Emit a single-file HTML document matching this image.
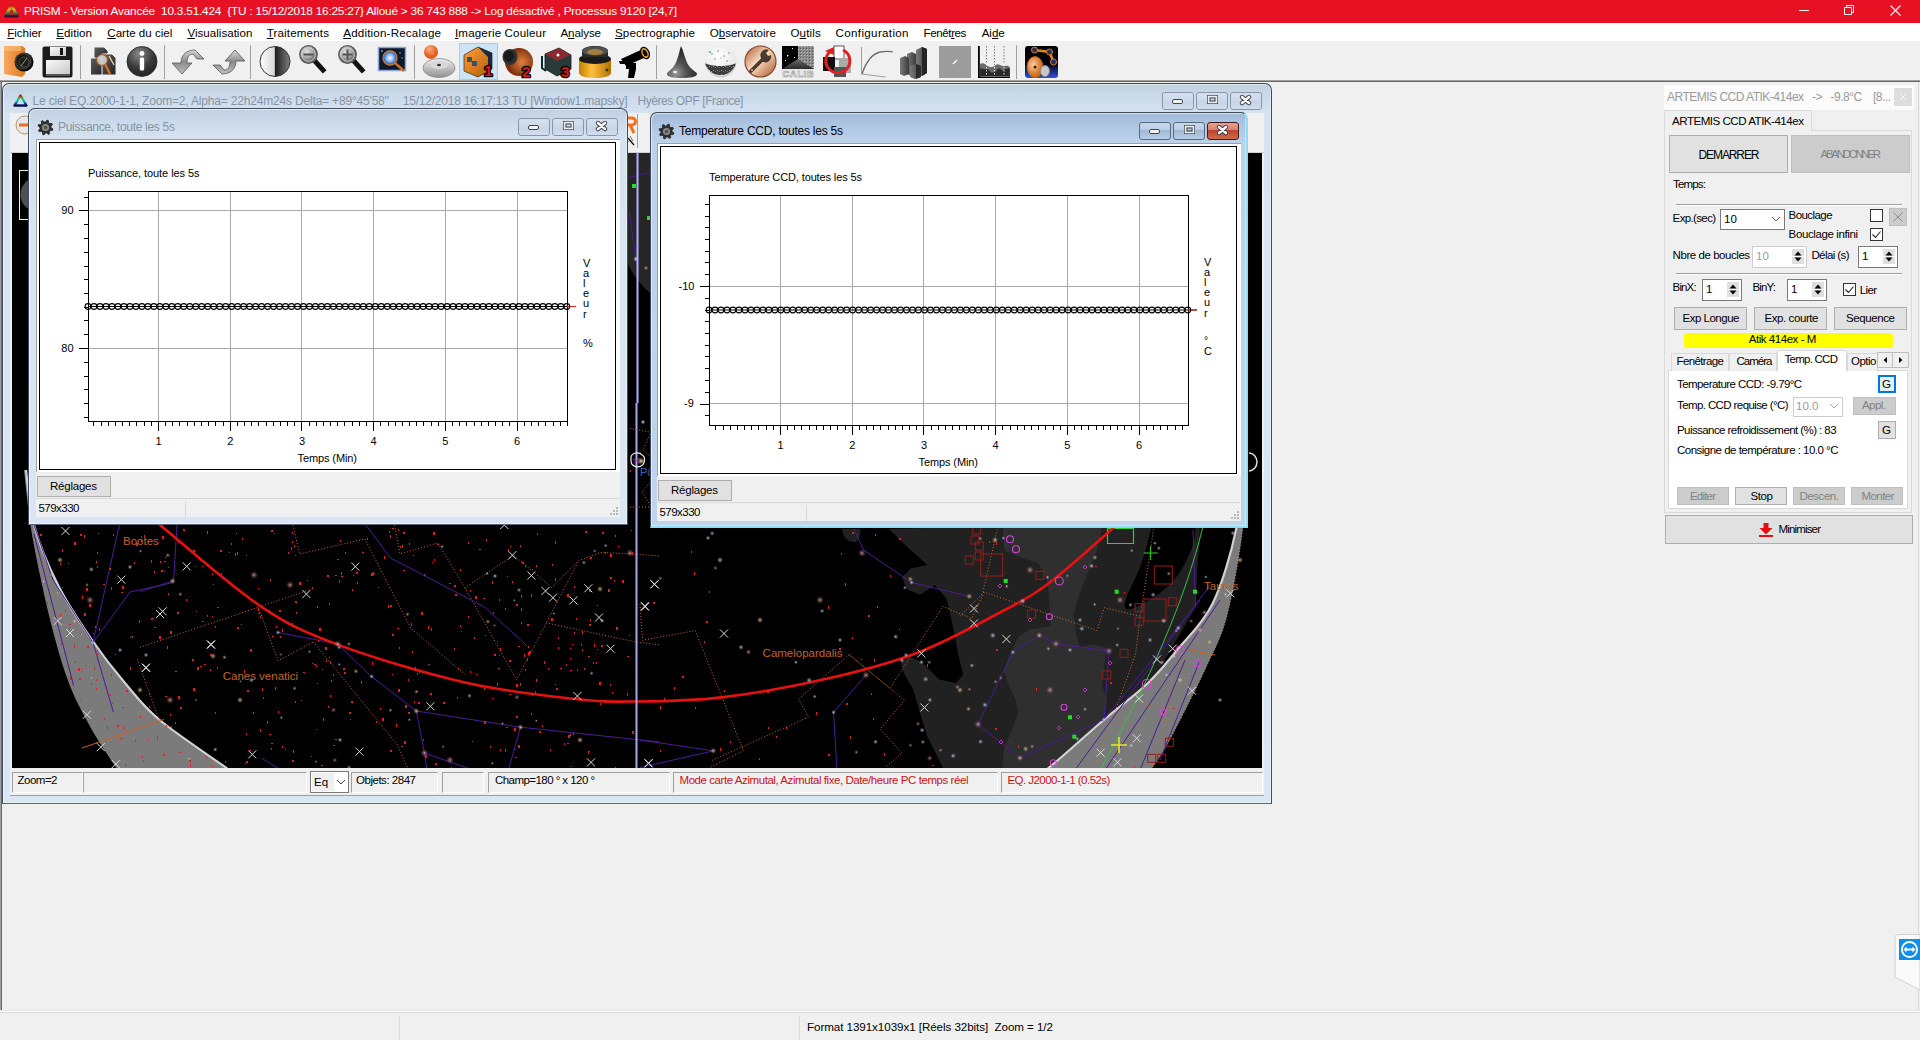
<!DOCTYPE html>
<html><head><meta charset="utf-8">
<style>
*{margin:0;padding:0;box-sizing:border-box}
html,body{width:1920px;height:1040px;overflow:hidden;background:#f0f0f0;font-family:"Liberation Sans",sans-serif;position:relative}
.a{position:absolute}
svg.a{overflow:visible}
.t{position:absolute;white-space:nowrap;line-height:1}
</style></head><body>
<div class="a" style="left:0px;top:0px;width:1920px;height:23px;background:#e81123"></div>
<div class="a" style="left:0px;top:23px;width:1920px;height:18px;background:#fff"></div>
<div class="a" style="left:0px;top:41px;width:1920px;height:39px;background:#f0f0f0"></div>
<svg class="a" style="left:3px;top:3px;" width="17" height="16" viewBox="0 0 17 16"><defs><linearGradient id="pg" x1="0" y1="0" x2="0" y2="1"><stop offset="0" stop-color="#b02010"/><stop offset=".35" stop-color="#e0c020"/><stop offset=".65" stop-color="#40a040"/><stop offset="1" stop-color="#301030"/></linearGradient></defs><path d="M8.5 2.5 L14.5 13 L2.5 13 Z" fill="none" stroke="url(#pg)" stroke-width="2.8" stroke-linejoin="round"/></svg>
<div class="t" id="t0" style="left:24px;top:6.01px;font-size:11.8px;color:#fff;letter-spacing:-0.201px;">PRISM - Version Avancée&nbsp; 10.3.51.424&nbsp; {TU : 15/12/2018 16:25:27} Alloué &gt; 36 743 888 -&gt; Log désactivé , Processus 9120 [24,7]</div>
<svg class="a" style="left:1798px;top:5px;" width="12" height="12" viewBox="0 0 12 12"><rect x="1" y="5" width="10" height="1" fill="#fff"/></svg>
<svg class="a" style="left:1843px;top:4px;" width="12" height="12" viewBox="0 0 12 12"><path d="M1.5 3.5h7v7h-7z M3.5 3.5v-2h7v7h-2" fill="none" stroke="#fff" stroke-width="1"/></svg>
<svg class="a" style="left:1890px;top:5px;" width="11" height="11" viewBox="0 0 11 11"><path d="M0.5 0.5l10 10M10.5 0.5l-10 10" stroke="#fff" stroke-width="1.1"/></svg>
<div class="t" id="t1" style="left:7.3px;top:26.88px;font-size:11.6px;color:#000;letter-spacing:-0.068px;text-decoration-thickness:1px;text-underline-offset:0.5px"><u>F</u>ichier</div>
<div class="t" id="t2" style="left:56.3px;top:26.88px;font-size:11.6px;color:#000;letter-spacing:0.038px;text-decoration-thickness:1px;text-underline-offset:0.5px"><u>E</u>dition</div>
<div class="t" id="t3" style="left:107.3px;top:26.88px;font-size:11.6px;color:#000;letter-spacing:0.000px;text-decoration-thickness:1px;text-underline-offset:0.5px"><u>C</u>arte du ciel</div>
<div class="t" id="t4" style="left:187.4px;top:26.88px;font-size:11.6px;color:#000;letter-spacing:0.007px;text-decoration-thickness:1px;text-underline-offset:0.5px"><u>V</u>isualisation</div>
<div class="t" id="t5" style="left:266.7px;top:26.88px;font-size:11.6px;color:#000;letter-spacing:0.151px;text-decoration-thickness:1px;text-underline-offset:0.5px"><u>T</u>raitements</div>
<div class="t" id="t6" style="left:343.2px;top:26.88px;font-size:11.6px;color:#000;letter-spacing:0.189px;text-decoration-thickness:1px;text-underline-offset:0.5px"><u>A</u>ddition-Recalage</div>
<div class="t" id="t7" style="left:455px;top:26.88px;font-size:11.6px;color:#000;letter-spacing:0.138px;text-decoration-thickness:1px;text-underline-offset:0.5px"><u>I</u>magerie Couleur</div>
<div class="t" id="t8" style="left:560.5px;top:26.88px;font-size:11.6px;color:#000;letter-spacing:-0.127px;text-decoration-thickness:1px;text-underline-offset:0.5px">A<u>n</u>alyse</div>
<div class="t" id="t9" style="left:615px;top:26.88px;font-size:11.6px;color:#000;letter-spacing:0.105px;text-decoration-thickness:1px;text-underline-offset:0.5px"><u>S</u>pectrographie</div>
<div class="t" id="t10" style="left:709.7px;top:26.88px;font-size:11.6px;color:#000;letter-spacing:-0.017px;text-decoration-thickness:1px;text-underline-offset:0.5px">O<u>b</u>servatoire</div>
<div class="t" id="t11" style="left:790.4px;top:26.88px;font-size:11.6px;color:#000;letter-spacing:0.149px;text-decoration-thickness:1px;text-underline-offset:0.5px">O<u>u</u>tils</div>
<div class="t" id="t12" style="left:835.6px;top:26.88px;font-size:11.6px;color:#000;letter-spacing:0.333px;text-decoration-thickness:1px;text-underline-offset:0.5px">Confi<u>g</u>uration</div>
<div class="t" id="t13" style="left:923.6px;top:26.88px;font-size:11.6px;color:#000;letter-spacing:-0.426px;text-decoration-thickness:1px;text-underline-offset:0.5px">Fenêt<u>r</u>es</div>
<div class="t" id="t14" style="left:981.7px;top:26.88px;font-size:11.6px;color:#000;letter-spacing:-0.046px;text-decoration-thickness:1px;text-underline-offset:0.5px">Ai<u>d</u>e</div>
<div class="a" style="left:0px;top:80px;width:1920px;height:1px;background:#a0a0a0"></div>
<div class="a" style="left:0px;top:81px;width:1920px;height:1px;background:#696969"></div>
<div class="a" style="left:0px;top:82px;width:1px;height:929px;background:#a0a0a0"></div>
<div class="a" style="left:1px;top:82px;width:1px;height:929px;background:#696969"></div>
<div class="a" style="left:0px;top:1010px;width:1920px;height:1px;background:#e3e3e3"></div>
<div class="a" style="left:0px;top:1011px;width:1920px;height:1px;background:#fff"></div>
<div class="a" style="left:0px;top:1012px;width:1920px;height:1px;background:#d9d9d9"></div>
<div class="a" style="left:399px;top:1016px;width:1px;height:24px;background:#d9d9d9"></div>
<div class="a" style="left:799px;top:1016px;width:1px;height:24px;background:#d9d9d9"></div>
<div class="t" id="t15" style="left:807px;top:1020.68px;font-size:11.6px;color:#000;letter-spacing:-0.056px;">Format 1391x1039x1 [Réels 32bits]&nbsp; Zoom = 1/2</div>
<div class="a" style="left:80px;top:45px;width:1px;height:34px;background:#a0a0a0"></div>
<div class="a" style="left:164px;top:45px;width:1px;height:34px;background:#a0a0a0"></div>
<div class="a" style="left:250px;top:45px;width:1px;height:34px;background:#a0a0a0"></div>
<div class="a" style="left:414px;top:45px;width:1px;height:34px;background:#a0a0a0"></div>
<div class="a" style="left:656px;top:45px;width:1px;height:34px;background:#a0a0a0"></div>
<div class="a" style="left:1016px;top:45px;width:1px;height:34px;background:#a0a0a0"></div>
<div class="a" style="left:459px;top:43px;width:39px;height:37px;background:#cce4f7;border:1px solid #99d1ff"></div>
<svg class="a" style="left:3px;top:45px;" width="32" height="33" viewBox="0 0 32 33"><defs><linearGradient id="fo" x1="0" y1="0" x2="1" y2="0"><stop offset="0" stop-color="#f8a860"/><stop offset="1" stop-color="#e07820"/></linearGradient><radialGradient id="le" cx=".45" cy=".45"><stop offset="0" stop-color="#303030"/><stop offset=".55" stop-color="#101010"/><stop offset=".8" stop-color="#3a3a3a"/><stop offset="1" stop-color="#000"/></radialGradient></defs><path d="M1 1h18l3 2v26l-3 3-18-3z" fill="url(#fo)"/><path d="M1 1h17v5H1z" fill="#f9c080" opacity=".6"/><circle cx="21" cy="17" r="9.5" fill="url(#le)"/><circle cx="21" cy="17" r="5" fill="#1a1a1a" stroke="#5a5a40" stroke-width=".8"/><path d="M18 21l6-8" stroke="#c0c080" stroke-width=".8"/></svg>
<svg class="a" style="left:42px;top:46px;" width="32" height="32" viewBox="0 0 32 32"><defs><linearGradient id="fl" x1="0" y1="0" x2="1" y2="1"><stop offset="0" stop-color="#fafafa"/><stop offset="1" stop-color="#c8c8c8"/></linearGradient></defs><path d="M2.5 0.5h26a2 2 0 0 1 2 2v27a2 2 0 0 1-2 2h-26a2 2 0 0 1-2-2v-27a2 2 0 0 1 2-2z" fill="#1c1c1c"/><rect x="8" y="1" width="16" height="9" fill="url(#fl)"/><rect x="18" y="2" width="3" height="7" fill="#111"/><rect x="4" y="14" width="24" height="14" fill="url(#fl)"/><rect x="4" y="28" width="24" height="2" fill="#555"/></svg>
<svg class="a" style="left:89px;top:46px;" width="29" height="31" viewBox="0 0 29 31"><defs><linearGradient id="im" x1="0" y1="0" x2="1" y2="1"><stop offset="0" stop-color="#606060"/><stop offset="1" stop-color="#202020"/></linearGradient></defs><path d="M5 1h10l4 4v9H5z" fill="url(#im)" stroke="#eee" stroke-width="1"/><rect x="1.5" y="12" width="14" height="17" fill="url(#im)" stroke="#eee" stroke-width="1"/><path d="M13 8h10l4 4v17H13z" fill="url(#im)" stroke="#eee" stroke-width="1"/><circle cx="13" cy="14" r="5.5" fill="#d8d8d8" opacity=".85" stroke="#a06030" stroke-width="1.3"/><path d="M16 18l5 10" stroke="#d07020" stroke-width="2.4"/><path d="M20 10l5 9" stroke="#f0d0a0" stroke-width="1.4"/></svg>
<svg class="a" style="left:126px;top:46px;" width="32" height="32" viewBox="0 0 32 32"><defs><radialGradient id="in" cx=".4" cy=".25" r=".9"><stop offset="0" stop-color="#8a8a8a"/><stop offset=".5" stop-color="#3a3a3a"/><stop offset="1" stop-color="#1a1a1a"/></radialGradient></defs><circle cx="16" cy="15.5" r="15" fill="url(#in)" stroke="#222" stroke-width=".8"/><circle cx="16" cy="7.5" r="2.4" fill="#fff"/><rect x="13.8" y="11.5" width="4.4" height="13" rx="1.5" fill="#fff"/></svg>
<svg class="a" style="left:172px;top:48px;" width="34" height="28" viewBox="0 0 34 28"><defs><linearGradient id="ar" x1="0" y1="0" x2="0" y2="1"><stop offset="0" stop-color="#d8d8d8"/><stop offset=".5" stop-color="#8a8a8a"/><stop offset="1" stop-color="#c0c0c0"/></linearGradient></defs><path d="M9 15c0-10 8-13 14-13l9 9-7 0-4-5c-4 0-6 3-6 9h5l-10 11-10-11z" fill="url(#ar)" stroke="#555" stroke-width=".8"/></svg>
<svg class="a" style="left:211px;top:48px;" width="34" height="28" viewBox="0 0 34 28"><path d="M25 13c0 10-8 13-14 13l-9-9h7l4 5c4 0 6-3 6-9h-5l10-11 10 11z" fill="url(#ar)" stroke="#555" stroke-width=".8"/></svg>
<svg class="a" style="left:259px;top:45px;" width="32" height="33" viewBox="0 0 32 33"><defs><linearGradient id="hc" x1="0" y1="0" x2="1" y2="0"><stop offset="0" stop-color="#fff"/><stop offset=".48" stop-color="#d8d8d8"/><stop offset=".5" stop-color="#1a1a1a"/><stop offset="1" stop-color="#808080"/></linearGradient></defs><circle cx="16" cy="16.5" r="15" fill="url(#hc)" stroke="#333" stroke-width="1"/></svg>
<svg class="a" style="left:299px;top:45px;" width="30" height="33" viewBox="0 0 30 33"><defs><radialGradient id="mg" cx=".4" cy=".35"><stop offset="0" stop-color="#e0e0e0"/><stop offset=".7" stop-color="#a8a8a8"/><stop offset="1" stop-color="#707070"/></radialGradient></defs><path d="M14 14l10 11" stroke="#111" stroke-width="5" stroke-linecap="square"/><circle cx="9.5" cy="9.5" r="8.8" fill="url(#mg)" stroke="#555" stroke-width="1.2"/><circle cx="9.5" cy="9.5" r="6.8" fill="none" stroke="#ddd" stroke-width=".8"/><rect x="4.5" y="8.5" width="10" height="2" fill="#555"/></svg>
<svg class="a" style="left:338px;top:45px;" width="30" height="33" viewBox="0 0 30 33"><defs><radialGradient id="mg" cx=".4" cy=".35"><stop offset="0" stop-color="#e0e0e0"/><stop offset=".7" stop-color="#a8a8a8"/><stop offset="1" stop-color="#707070"/></radialGradient></defs><path d="M14 14l10 11" stroke="#111" stroke-width="5" stroke-linecap="square"/><circle cx="9.5" cy="9.5" r="8.8" fill="url(#mg)" stroke="#555" stroke-width="1.2"/><circle cx="9.5" cy="9.5" r="6.8" fill="none" stroke="#ddd" stroke-width=".8"/><rect x="4.5" y="8.5" width="10" height="2" fill="#555"/><rect x="8.5" y="4.5" width="2" height="10" fill="#555"/></svg>
<svg class="a" style="left:377px;top:46px;" width="32" height="30" viewBox="0 0 32 30"><defs><radialGradient id="gl" cx=".5" cy=".5"><stop offset="0" stop-color="#fff"/><stop offset=".5" stop-color="#8ab8f8"/><stop offset="1" stop-color="#2050a0"/></radialGradient></defs><rect x="1.5" y="1.5" width="27" height="23" fill="#10182a" stroke="#88a8d8" stroke-width="1.5"/><circle cx="13" cy="12" r="7" fill="url(#gl)" stroke="#c08040" stroke-width="1.3"/><path d="M18 17l9 8" stroke="#d06a20" stroke-width="2.5"/><circle cx="23" cy="7" r=".8" fill="#8af"/><circle cx="25" cy="12" r=".7" fill="#8af"/><circle cx="5" cy="5" r=".7" fill="#fff"/></svg>
<svg class="a" style="left:422px;top:44px;" width="34" height="35" viewBox="0 0 34 35"><defs><radialGradient id="og" cx=".4" cy=".3"><stop offset="0" stop-color="#ffb080"/><stop offset="1" stop-color="#e06020"/></radialGradient><linearGradient id="gg" x1="0" y1="0" x2="0" y2="1"><stop offset="0" stop-color="#f0f0f0"/><stop offset="1" stop-color="#909090"/></linearGradient></defs><ellipse cx="17" cy="24" rx="16" ry="9.5" fill="url(#gg)" stroke="#888" stroke-width=".8"/><ellipse cx="17" cy="21" rx="9" ry="4" fill="#d8d8d8"/><ellipse cx="17" cy="21" rx="2" ry="1.2" fill="#333"/><circle cx="9" cy="8" r="7" fill="url(#og)"/><circle cx="10" cy="9" r="2" fill="#f08040"/></svg>
<svg class="a" style="left:462px;top:45px;" width="34" height="34" viewBox="0 0 34 34"><defs><linearGradient id="c1" x1="0" y1="0" x2="1" y2="1"><stop offset="0" stop-color="#ffa040"/><stop offset="1" stop-color="#b05a00"/></linearGradient></defs><path d="M2 10l14-8 14 6v16l-14 8-14-6z" fill="url(#c1)" stroke="#503010" stroke-width=".8"/><path d="M16 2l14 6v16l-4 2V12z" fill="#1a2840"/><rect x="5" y="12" width="5" height="5" fill="#405060"/><rect x="10" y="16" width="5" height="5" fill="#405060"/><text x="22" y="31" font-family="Liberation Sans" font-weight="bold" font-size="15" fill="#e81010" stroke="#000" stroke-width="2.6" paint-order="stroke" stroke-linejoin="round">1</text></svg>
<svg class="a" style="left:501px;top:46px;" width="34" height="33" viewBox="0 0 34 33"><defs><radialGradient id="c2" cx=".6" cy=".5"><stop offset="0" stop-color="#e08040"/><stop offset="1" stop-color="#803010"/></radialGradient></defs><ellipse cx="18" cy="16" rx="14" ry="14" fill="url(#c2)"/><ellipse cx="9" cy="11" rx="7.5" ry="8" fill="#303030"/><ellipse cx="8" cy="10" rx="5" ry="5.5" fill="#1a1a1a"/><text x="21" y="31" font-family="Liberation Sans" font-weight="bold" font-size="15" fill="#e81010" stroke="#000" stroke-width="2.6" paint-order="stroke" stroke-linejoin="round">2</text></svg>
<svg class="a" style="left:540px;top:46px;" width="34" height="33" viewBox="0 0 34 33"><path d="M5 8l14-6 12 7v14l-14 7-12-7z" fill="#2a3a3a" stroke="#0a1a1a" stroke-width=".8"/><path d="M5 8l14-6 12 7-14 6z" fill="#8a2a30"/><circle cx="18" cy="9" r="1.5" fill="#fff"/><path d="M2 10v12l4 3" fill="none" stroke="#0a2a2a" stroke-width="2"/><text x="21" y="31" font-family="Liberation Sans" font-weight="bold" font-size="15" fill="#e81010" stroke="#000" stroke-width="2.6" paint-order="stroke" stroke-linejoin="round">3</text></svg>
<svg class="a" style="left:578px;top:45px;" width="34" height="33" viewBox="0 0 34 33"><defs><linearGradient id="oc" x1="0" y1="0" x2="1" y2="0"><stop offset="0" stop-color="#c08000"/><stop offset=".4" stop-color="#ffc040"/><stop offset="1" stop-color="#b07000"/></linearGradient></defs><path d="M1 14v14c0 3 7 5 16 5s16-2 16-5V14z" fill="url(#oc)"/><ellipse cx="17" cy="14" rx="16" ry="5" fill="#1a1a1a"/><path d="M4 12V6c0-3 6-5 13-5s13 2 13 5v6" fill="#2a2a2a"/><ellipse cx="17" cy="6" rx="13" ry="4.5" fill="#505050"/><ellipse cx="17" cy="7" rx="8" ry="3" fill="#a08040"/><circle cx="29" cy="25" r="1.5" fill="#333"/></svg>
<svg class="a" style="left:618px;top:45px;" width="34" height="34" viewBox="0 0 34 34"><path d="M3 14l22-10 3 8-20 9z" fill="#000"/><ellipse cx="27" cy="8" rx="4" ry="6" transform="rotate(-25 27 8)" fill="#f0a020" stroke="#000" stroke-width="1.3"/><ellipse cx="27" cy="8" rx="2" ry="3.5" transform="rotate(-25 27 8)" fill="#000"/><path d="M8 18h10v6l-2 9h-6l1-9h-3z" fill="#000"/><path d="M1 16h6l2 3H2z" fill="#000"/></svg>
<svg class="a" style="left:667px;top:45px;" width="31" height="34" viewBox="0 0 31 34"><defs><radialGradient id="cn" cx=".3" cy=".85" r=".9"><stop offset="0" stop-color="#9a9a9a"/><stop offset=".4" stop-color="#505050"/><stop offset="1" stop-color="#1a1a1a"/></radialGradient></defs><path d="M14 1c3 6 4 14 8 20 4 5 8 6 8 8 0 3-7 4-15 4S0 32 0 29c0-2 4-4 7-8 4-6 5-14 7-20z" fill="url(#cn)"/><ellipse cx="8" cy="27" rx="2" ry="1.2" fill="#eee"/></svg>
<svg class="a" style="left:704px;top:45px;" width="33" height="33" viewBox="0 0 33 33"><defs><radialGradient id="sp" cx=".45" cy=".35" r=".7"><stop offset="0" stop-color="#fff"/><stop offset=".75" stop-color="#e8e8e8"/><stop offset="1" stop-color="#b8b8b8"/></radialGradient><pattern id="nz" width="4" height="4" patternUnits="userSpaceOnUse"><rect width="4" height="4" fill="#3a3a3a"/><rect x="1" y="1" width="1" height="1" fill="#9a9a9a"/><rect x="3" y="2" width="1" height="1" fill="#777"/></pattern></defs><circle cx="16.5" cy="16.5" r="16" fill="url(#sp)"/><path d="M1 18a16 16 0 0 0 31 0c-5 4-26 4-31 0z" fill="url(#nz)"/><g fill="#6070a0"><circle cx="8" cy="9" r=".7"/><circle cx="14" cy="6" r=".7"/><circle cx="20" cy="11" r=".7"/><circle cx="25" cy="8" r=".7"/><circle cx="11" cy="14" r=".7"/><circle cx="23" cy="16" r=".7"/><circle cx="17" cy="13" r=".6"/></g><circle cx="6" cy="7" r="1" fill="#40c040"/></svg>
<svg class="a" style="left:744px;top:45px;" width="33" height="33" viewBox="0 0 33 33"><defs><linearGradient id="cu" x1="0" y1="0" x2="1" y2="1"><stop offset="0" stop-color="#a85a30"/><stop offset=".45" stop-color="#f8d8c0"/><stop offset=".55" stop-color="#f0c8a8"/><stop offset="1" stop-color="#a05028"/></linearGradient></defs><circle cx="16.5" cy="16.5" r="15.5" fill="url(#cu)" stroke="#8a4a28" stroke-width="1.2"/><path d="M7 26l12-12" stroke="#4a3a30" stroke-width="3.6" stroke-linecap="round"/><path d="M17 13a6 6 0 0 1 8-8l-3 3 2 3 3-1a6 6 0 0 1-8 7z" fill="#4a3a30"/><circle cx="8" cy="25" r="1" fill="#e0b090"/></svg>
<svg class="a" style="left:782px;top:46px;" width="33" height="32" viewBox="0 0 33 32"><defs><pattern id="nz2" width="3" height="3" patternUnits="userSpaceOnUse"><rect width="3" height="3" fill="#8a8a8a"/><rect x="1" y="0" width="1" height="1" fill="#c0c0c0"/><rect x="0" y="2" width="1" height="1" fill="#5a5a5a"/></pattern><linearGradient id="pg2" x1="0" y1="0" x2="0" y2="1"><stop offset="0" stop-color="#6a6a6a"/><stop offset="1" stop-color="#2a2a2a"/></linearGradient></defs><rect x="0" y="0" width="16" height="23" fill="#000"/><rect x="16" y="0" width="16" height="23" fill="url(#nz2)"/><path d="M0 23l16-10 16 10z" fill="url(#pg2)"/><g fill="#fff"><rect x="10" y="2" width="1" height="1"/><rect x="5" y="9" width="1.4" height="1.4"/><rect x="12" y="11" width="1" height="1"/><rect x="3" y="14" width="1" height="1"/></g><rect x="0" y="23" width="32" height="9" fill="#e8e8e8"/><text x="0.5" y="31" font-family="Liberation Sans" font-weight="bold" font-size="9.5" fill="#fff" stroke="#888" stroke-width=".5" textLength="31">CALIB</text></svg>
<svg class="a" style="left:822px;top:45px;" width="32" height="33" viewBox="0 0 32 33"><rect x="12" y="1" width="10" height="13" fill="#fff" stroke="#333" stroke-width=".8"/><rect x="1" y="12" width="12" height="14" fill="#111"/><rect x="17" y="13" width="12" height="15" fill="#aaa"/><rect x="12" y="22" width="12" height="10" fill="#555"/><path d="M9 6a12 12 0 1 0 12-1" fill="none" stroke="#e02020" stroke-width="3"/><path d="M3 6l9-4 0 8z" fill="#e02020"/></svg>
<svg class="a" style="left:860px;top:46px;" width="34" height="30" viewBox="0 0 34 30"><path d="M1.5 1v27l24 3" fill="none" stroke="#a0a0a0" stroke-width="1"/><path d="M2 28c4-12 10-20 18-22 6-1 10-1 13 0" fill="none" stroke="#6a6a6a" stroke-width="1.3"/></svg>
<svg class="a" style="left:899px;top:45px;" width="32" height="34" viewBox="0 0 32 34"><defs><linearGradient id="br" x1="0" y1="0" x2="1" y2="0"><stop offset="0" stop-color="#7a7a7a"/><stop offset="1" stop-color="#3a3a3a"/></linearGradient></defs><path d="M17 5l6-3 5 2v24l-5 3-6-2z" fill="url(#br)"/><path d="M23 2l5 2v24l-5 3z" fill="#222"/><path d="M8 9l5-2 4 2v20l-5 2-4-2z" fill="url(#br)"/><path d="M1 13l5-2 4 2v16l-5 2-4-2z" fill="url(#br)"/><path d="M11 21l6-2 5 2v11l-6 2-5-2z" fill="url(#br)"/><path d="M17 19l5 2v11l-5 2z" fill="#2a2a2a"/></svg>
<svg class="a" style="left:939px;top:46px;" width="32" height="32" viewBox="0 0 32 32"><rect x="0" y="0" width="32" height="32" fill="#9c9c9c"/><path d="M14 18l4-4" stroke="#fff" stroke-width="1.2"/></svg>
<svg class="a" style="left:978px;top:46px;" width="32" height="32" viewBox="0 0 32 32"><rect x="0" y="0" width="1.8" height="32" fill="#000"/><rect x="0" y="30" width="32" height="2" fill="#000"/><path d="M1.8 18c3-2 6 0 8 2s6 1 8-1 5 1 7 1 5-1 7 1v10H1.8z" fill="#6a6a6a"/><path d="M1.8 22c4 2 8 0 10 3s6 1 8-2 4 3 6 1 4-1 6-2v8H1.8z" fill="#2a2a2a"/><path d="M8.5 0v30M16.5 0v30M26 0v30" stroke="#fff" stroke-width="1" stroke-dasharray="1.5 1.5" opacity=".9"/><path d="M8.5 0v18M16.5 0v19M26 0v18" stroke="#555" stroke-width=".8" stroke-dasharray="1.5 1.5"/></svg>
<svg class="a" style="left:1025px;top:46px;" width="33" height="32" viewBox="0 0 33 32"><defs><linearGradient id="bl" x1="0" y1="0" x2="0" y2="1"><stop offset="0" stop-color="#000"/><stop offset=".55" stop-color="#000010"/><stop offset="1" stop-color="#3050e0"/></linearGradient><radialGradient id="og2" cx=".4" cy=".4"><stop offset="0" stop-color="#ffd0a0"/><stop offset="1" stop-color="#d07020"/></radialGradient></defs><rect x="0" y="0" width="33" height="32" rx="3" fill="url(#bl)"/><path d="M9.5 4l15 2 4 10" fill="none" stroke="#e08020" stroke-width="2.6"/><circle cx="9.5" cy="4" r="3" fill="#203060" stroke="#e08020" stroke-width="1"/><circle cx="24.5" cy="6" r="3" fill="#203060" stroke="#e08020" stroke-width="1"/><circle cx="28.5" cy="16" r="3" fill="#203060" stroke="#e08020" stroke-width="1"/><ellipse cx="10" cy="21" rx="8" ry="10.5" fill="url(#og2)" stroke="#c06010" stroke-width=".8"/><circle cx="10" cy="21" r="1.5" fill="#402000"/><ellipse cx="20" cy="25" rx="4.5" ry="5.5" fill="#c8c8c8" stroke="#888" stroke-width=".8"/></svg>
<div class="a" style="left:2px;top:83px;width:1270px;height:721px;background:linear-gradient(180deg,#c1d0e2 0px,#ccdbeb 14px,#d6e3f1 30px,#dae6f3 100%);border:1px solid #3f4b58;border-bottom-color:#5b6775;border-radius:7px 7px 0 0;box-shadow:inset 1px 1px 0 rgba(255,255,255,.55),inset -1px -1px 0 rgba(255,255,255,.4)"></div>
<div class="a" style="left:1162px;top:92px;width:32px;height:18px;background:linear-gradient(#d6e1ee,#cbd9ea 50%,#c5d4e6 51%,#d0deee);border:1px solid #8797ab;border-radius:3px"></div>
<svg class="a" style="left:1172px;top:98px;" width="12" height="7" viewBox="0 0 12 7"><rect x="0.5" y="1.5" width="10" height="4" rx="1.5" fill="#f4f4f4" stroke="#40454c" stroke-width="1"/></svg>
<div class="a" style="left:1196px;top:92px;width:32px;height:18px;background:linear-gradient(#d6e1ee,#cbd9ea 50%,#c5d4e6 51%,#d0deee);border:1px solid #8797ab;border-radius:3px"></div>
<svg class="a" style="left:1207px;top:95px;" width="11" height="10" viewBox="0 0 11 10"><rect x="0.5" y="0.5" width="10" height="8" fill="none" stroke="#40454c" stroke-width="1"/><rect x="1.5" y="1.5" width="8" height="6" fill="none" stroke="#eee" stroke-width="1.6"/><rect x="3" y="3" width="5" height="3" fill="none" stroke="#40454c" stroke-width="1"/></svg>
<div class="a" style="left:1230px;top:92px;width:32px;height:18px;background:linear-gradient(#d6e1ee,#cbd9ea 50%,#c5d4e6 51%,#d0deee);border:1px solid #8797ab;border-radius:3px"></div>
<svg class="a" style="left:1239px;top:95px;" width="13" height="10" viewBox="0 0 13 10"><path d="M3 2L10 8M10 2L3 8" stroke="#3a3f46" stroke-width="4.4" stroke-linecap="round"/><path d="M3 2L10 8M10 2L3 8" stroke="#f6f6f6" stroke-width="2.6" stroke-linecap="round"/></svg>
<svg class="a" style="left:12px;top:93px;" width="17" height="15" viewBox="0 0 17 15"><defs><linearGradient id="sg" x1="0" y1="0" x2="0" y2="1"><stop offset="0" stop-color="#c02010"/><stop offset=".3" stop-color="#30c030"/><stop offset=".55" stop-color="#10c0d0"/><stop offset=".8" stop-color="#1040a0"/><stop offset="1" stop-color="#101040"/></linearGradient></defs><path d="M8.5 2.5 L14.5 12.5 L2.5 12.5 Z" fill="none" stroke="url(#sg)" stroke-width="2.4" stroke-linejoin="round"/></svg>
<div class="t" id="t16" style="left:32.5px;top:95.44px;font-size:12px;color:#8793a2;letter-spacing:-0.181px;">Le ciel EQ.2000-1-1, Zoom=2, Alpha= 22h24m24s Delta= +89°45'58''</div>
<div class="t" id="t17" style="left:402.8px;top:95.44px;font-size:12px;color:#8793a2;letter-spacing:-0.225px;">15/12/2018 16:17:13 TU [Window1.mapsky]</div>
<div class="t" id="t18" style="left:637.4px;top:95.44px;font-size:12px;color:#8793a2;letter-spacing:-0.409px;">Hyères OPF [France]</div>
<div class="a" style="left:10px;top:113px;width:1254px;height:683px;background:#f0f0f0"></div>
<svg class="a" style="left:14px;top:115px;" width="16" height="22" viewBox="0 0 16 22"><circle cx="11" cy="10" r="9" fill="#e8e8e8" stroke="#b89070" stroke-width="1"/><rect x="5" y="8.5" width="12" height="3" fill="#e87020"/></svg>
<svg class="a" style="left:626px;top:114px;" width="12" height="34" viewBox="0 0 12 34"><path d="M2 4h4a3 3 0 0 1 0 7h-4M4 11l4 8" fill="none" stroke="#f07020" stroke-width="3"/><path d="M4 22l3 5M4 26l-2 2" stroke="#777" stroke-width="1"/><path d="M2 24l6 7" stroke="#000" stroke-width="1.2"/></svg>
<div class="a" style="left:637px;top:114px;width:1px;height:34px;background:#a0a0a0"></div>
<div class="a" style="left:10px;top:152px;width:1254px;height:1px;background:#d0d0d0"></div>
<div class="a" style="left:12px;top:153px;width:1250px;height:615px;background:#000;overflow:hidden">
<svg class="a" style="left:0;top:0" width="1250" height="615" viewBox="12 153 1250 615"><defs><radialGradient id="sw"><stop offset="0" stop-color="#fff" stop-opacity=".95"/><stop offset=".35" stop-color="#cfe0ff" stop-opacity=".6"/><stop offset="1" stop-color="#6080c0" stop-opacity="0"/></radialGradient><radialGradient id="sy"><stop offset="0" stop-color="#fff8e0" stop-opacity=".95"/><stop offset=".35" stop-color="#e0c090" stop-opacity=".6"/><stop offset="1" stop-color="#a07040" stop-opacity="0"/></radialGradient><radialGradient id="sr"><stop offset="0" stop-color="#ffe0e0" stop-opacity=".9"/><stop offset=".35" stop-color="#d09090" stop-opacity=".55"/><stop offset="1" stop-color="#905050" stop-opacity="0"/></radialGradient></defs><path d="M620,153 L660,153 L660,300 C650,295 635,280 627,262 L620,250 Z" fill="#262626"/><path d="M627,178 L652,172 M629,211 L636,259 L640,265" fill="none" stroke="#4b1c96" stroke-width="1"/><circle cx="636" cy="259" r="3" fill="url(#sw)"/><circle cx="646" cy="268" r="2.5" fill="url(#sr)"/><path d="M889.0,529.0 L903.5,543.5 L927.4,565.0 L910.7,568.5 L902.3,577.0 L906.0,589.0 L920.0,594.8 L934.6,585.0 L946.5,598.4 L953.6,629.4 L958.4,655.6 L963.2,674.7 L956.0,683.0 L939.3,679.5 L922.6,662.8 L908.3,655.6 L901.0,662.8 L903.5,672.4 L913.0,689.0 L920.0,713.0 L927.4,736.8 L944.0,770.0 L1100.0,770.0 L1200.0,600.0 L1240.0,520.0Z" fill="#212121"/><path d="M842,529 C843,537 848,543 856,542 C860,538 861,533 860,529Z" fill="#212121"/><path d="M1005.9,527.0 L1007.1,548.6 L1021.3,554.5 L1040.1,560.3 L1049.5,576.8 L1051.9,595.7 L1053.1,614.5 L1054.3,628.7 L1030.7,632.2 L1021.3,638.1 L1011.8,657.0 L1007.1,671.1 L1011.8,685.2 L1018.9,699.4 L1021.3,713.5 L1014.2,732.4 L1007.1,748.8 L1004.8,770.0 L1049.5,770.0 L1101.4,720.6 L1103.7,701.7 L1099.0,685.2 L1101.4,666.4 L1103.7,649.9 L1092.0,647.5 L1077.8,651.1 L1073.1,633.4 L1070.7,614.5 L1075.5,595.7 L1084.9,572.1 L1094.3,548.6 L1099.0,527.0Z" fill="#2f2f2f" stroke="#2f2f2f" stroke-width="6" stroke-linejoin="round"/><path d="M1151.6,527.0 C1149.8,533.3 1145.3,552.8 1141.0,564.8 C1136.7,576.8 1127.9,591.6 1126.0,599.0 C1124.1,606.4 1124.0,610.1 1129.4,609.3 C1134.8,608.5 1150.2,600.0 1158.5,594.0 C1166.8,588.0 1173.3,581.4 1179.0,573.4 C1184.7,565.4 1189.9,553.7 1192.7,546.0 C1195.5,538.3 1195.5,530.2 1196.0,527.0Z" fill="#000"/><path d="M1199.6,527 L1199.6,544 C1196,573 1196,600 1196,625 L1245,527Z" fill="#000"/><path d="M24.0,470.0 C25.1,479.1 27.6,506.5 30.4,524.8 C33.2,543.1 37.1,561.6 41.0,580.0 C44.9,598.4 49.2,617.3 54.0,635.0 C58.8,652.7 63.7,670.2 70.0,686.0 C76.3,701.8 84.3,716.4 92.0,730.0 C99.7,743.6 110.3,758.4 116.0,767.6 C121.7,776.8 124.3,782.1 126.0,785.0 L250.0,785.0 C246.0,782.1 241.2,778.5 226.0,767.6 C210.8,756.7 175.8,733.6 159.0,719.5 C142.2,705.4 136.2,696.2 125.0,683.0 C113.8,669.8 103.2,656.3 92.0,640.0 C80.8,623.7 67.7,604.2 58.0,585.0 C48.3,565.8 39.3,544.2 34.0,525.0 C28.7,505.8 27.3,479.2 26.0,470.0Z" fill="#7b7b7b"/><path d="M1245.0,470.0 C1244.6,479.9 1245.5,505.3 1242.5,529.6 C1239.5,553.9 1233.0,592.8 1226.8,616.0 C1220.6,639.2 1214.8,648.2 1205.2,669.0 C1195.6,689.8 1177.8,724.6 1169.0,741.0 C1160.2,757.4 1157.0,760.3 1152.3,767.6 C1147.6,774.9 1142.9,782.1 1141.0,785.0 L1022.0,785.0 C1026.5,782.1 1035.3,778.5 1049.0,767.6 C1062.7,756.7 1087.8,733.5 1104.2,719.5 C1120.6,705.5 1135.5,694.9 1147.5,683.5 C1159.5,672.1 1165.5,664.2 1176.3,651.0 C1187.1,637.8 1202.5,624.2 1212.4,604.0 C1222.4,583.8 1231.4,551.9 1236.0,529.6 C1240.6,507.3 1239.3,479.9 1240.0,470.0Z" fill="#7b7b7b"/><path d="M26.0,470.0 C27.3,479.2 28.7,505.8 34.0,525.0 C39.3,544.2 48.3,565.8 58.0,585.0 C67.7,604.2 80.8,623.7 92.0,640.0 C103.2,656.3 113.8,669.8 125.0,683.0 C136.2,696.2 142.2,705.4 159.0,719.5 C175.8,733.6 210.8,756.7 226.0,767.6 C241.2,778.5 246.0,782.1 250.0,785.0" fill="none" stroke="#d2d2d2" stroke-width="2.2"/><path d="M1240.0,470.0 C1239.3,479.9 1240.6,507.3 1236.0,529.6 C1231.4,551.9 1222.4,583.8 1212.4,604.0 C1202.5,624.2 1187.1,637.8 1176.3,651.0 C1165.5,664.2 1159.5,672.1 1147.5,683.5 C1135.5,694.9 1120.6,705.5 1104.2,719.5 C1087.8,733.5 1062.7,756.7 1049.0,767.6 C1035.3,778.5 1026.5,782.1 1022.0,785.0" fill="none" stroke="#d2d2d2" stroke-width="2.2"/><path d="M1245.0,470.0 C1244.6,479.9 1245.5,505.3 1242.5,529.6 C1239.5,553.9 1233.0,592.8 1226.8,616.0 C1220.6,639.2 1214.8,648.2 1205.2,669.0 C1195.6,689.8 1177.8,724.6 1169.0,741.0 C1160.2,757.4 1157.0,760.3 1152.3,767.6 C1147.6,774.9 1142.9,782.1 1141.0,785.0" fill="none" stroke="#c0a090" stroke-width=".8" stroke-dasharray="1.5 1.5"/><rect x="19.5" y="170.5" width="20" height="49" fill="none" stroke="#f0f0f0" stroke-width="1"/><circle cx="38" cy="194.5" r="17.5" fill="#505050"/><path d="M293.0,525.4 L299.8,553.9 L364.8,539.0 L410.9,628.3 L465.0,674.4" fill="none" stroke="#c8702a" stroke-width="1" stroke-dasharray="1 2"/><path d="M394.6,525.4 L400.0,553.9 L437.9,543.0 L465.0,587.7 L513.8,555.2 L551.7,587.7 L578.8,560.6 L600.5,552.5 L633.0,553.9 L660.0,556.0" fill="none" stroke="#c8702a" stroke-width="1" stroke-dasharray="1 2"/><path d="M465.0,587.7 L516.5,679.8 L546.3,622.9 L578.8,560.6" fill="none" stroke="#c8702a" stroke-width="1" stroke-dasharray="1 2"/><path d="M546.3,622.9 L635.7,641.9 L660.0,645.0" fill="none" stroke="#c8702a" stroke-width="1" stroke-dasharray="1 2"/><path d="M140.0,647.3 L307.9,590.4" fill="none" stroke="#c8702a" stroke-width="1" stroke-dasharray="1 2"/><path d="M259.2,609.4 L278.1,660.8 L313.3,641.9" fill="none" stroke="#c8702a" stroke-width="1" stroke-dasharray="1 2"/><path d="M313.3,641.9 L397.3,744.8 L408.1,769.0" fill="none" stroke="#c8702a" stroke-width="1" stroke-dasharray="1 2"/><path d="M137.4,659.4 L159.0,719.5" fill="none" stroke="#c8702a" stroke-width="1" stroke-dasharray="1 2"/><path d="M640.0,604.0 L642.4,640.2 L695.3,630.6 L743.4,750.8 L709.7,767.6" fill="none" stroke="#c8702a" stroke-width="1" stroke-dasharray="1 2"/><path d="M712.0,760.4 L808.3,717.1 L798.7,699.0 L849.1,654.6 L904.4,700.3 L880.4,729.1 L902.0,753.2 L885.2,767.6" fill="none" stroke="#c8702a" stroke-width="1" stroke-dasharray="1 2"/><path d="M849.1,654.6 L890.0,688.3 L942.9,606.5 L971.7,618.6 L984.0,592.1" fill="none" stroke="#c8702a" stroke-width="1" stroke-dasharray="1 2"/><path d="M960.0,616.2 L984.0,592.1 L1097.0,630.6 L1104.2,607.7 L1140.3,616.2 L1135.5,654.6 L1094.6,767.6" fill="none" stroke="#c8702a" stroke-width="1" stroke-dasharray="1 2"/><path d="M997.3,529.6 L982.8,592.1" fill="none" stroke="#c8702a" stroke-width="1" stroke-dasharray="1 2"/><path d="M1153.5,529.6 L1140.3,616.2" fill="none" stroke="#c8702a" stroke-width="1" stroke-dasharray="1 2"/><path d="M1186.0,655.0 L1170.0,700.0 L1152.0,767.0" fill="none" stroke="#c8702a" stroke-width="1" stroke-dasharray="1 2"/><path d="M82,748 L163.8,719.5" stroke="#d06020" stroke-width="1"/><path d="M1190,650 L1215,655" stroke="#d06020" stroke-width="1"/><path d="M119.4,525.0 L93.0,642.6" fill="none" stroke="#4b1c96" stroke-width="1"/><path d="M93.0,642.6 L130.0,592.0 L173.5,582.5 L177.0,525.0" fill="none" stroke="#4b1c96" stroke-width="1"/><path d="M93.0,642.6 L53.0,580.0 L34.0,525.0" fill="none" stroke="#4b1c96" stroke-width="1"/><path d="M93.0,642.6 L113.4,712.0" fill="none" stroke="#4b1c96" stroke-width="1"/><path d="M34.0,534.0 L73.7,686.0" fill="none" stroke="#4b1c96" stroke-width="1"/><path d="M172.5,581.0 L140.0,591.8" fill="none" stroke="#4b1c96" stroke-width="1"/><path d="M278.0,632.4 L337.7,644.0 L371.6,676.5 L416.3,711.0 L424.4,753.0 L427.0,770.0" fill="none" stroke="#4b1c96" stroke-width="1"/><path d="M416.3,711.0 L520.5,727.2 L660.0,742.0" fill="none" stroke="#4b1c96" stroke-width="1"/><path d="M520.5,727.2 L508.4,770.0" fill="none" stroke="#4b1c96" stroke-width="1"/><path d="M424.4,753.0 L473.0,770.0" fill="none" stroke="#4b1c96" stroke-width="1"/><path d="M366.0,525.0 L390.5,558.0 L484.0,606.7 L527.3,646.0" fill="none" stroke="#4b1c96" stroke-width="1"/><path d="M262.0,758.4 L280.8,770.0" fill="none" stroke="#4b1c96" stroke-width="1"/><path d="M854.0,529.0 L863.6,550.0 L911.6,582.5 L969.3,596.4" fill="none" stroke="#4b1c96" stroke-width="1"/><path d="M866.0,675.0 L833.5,712.3 L837.0,770.0" fill="none" stroke="#4b1c96" stroke-width="1"/><path d="M640.0,740.0 L713.3,750.8 L640.0,767.6" fill="none" stroke="#4b1c96" stroke-width="1"/><path d="M978.0,724.3 L1012.9,652.2 L1039.3,635.4 L1056.0,643.8 L1109.0,651.0 L1104.0,719.5 L1020.0,758.0 L978.0,724.3" fill="none" stroke="#4b1c96" stroke-width="1"/><path d="M1104.0,719.5 L1200.0,600.0" fill="none" stroke="#4b1c96" stroke-width="1"/><path d="M1193.0,529.6 L1195.6,606.5" fill="none" stroke="#4b1c96" stroke-width="1"/><path d="M1075.0,770.0 L1210.0,585.0" fill="none" stroke="#4b1c96" stroke-width="1"/><path d="M1105.0,770.0 L1220.0,600.0" fill="none" stroke="#4b1c96" stroke-width="1"/><path d="M1140.0,770.0 L1185.0,660.0" fill="none" stroke="#4b1c96" stroke-width="1"/><path d="M1160.0,760.0 L1200.0,660.0" fill="none" stroke="#4b1c96" stroke-width="1"/><path d="M1202.8,527 C1185,600 1150,680 1100,770" fill="none" stroke="#3cc03c" stroke-width="1"/><path d="M1107.5,528.5h26v15h-26z" fill="none" stroke="#30d030" stroke-width="1.2"/><path d="M1150.7,546v14M1143.7,553h14" stroke="#30d030" stroke-width="1"/><rect x="1003.7" y="579" width="4" height="4" fill="#20e020"/><rect x="1114.7" y="589.7" width="4" height="4" fill="#20e020"/><rect x="1068" y="715.3" width="4" height="4" fill="#20e020"/><rect x="1072.3" y="734.7" width="4" height="4" fill="#20e020"/><rect x="1193" y="589.7" width="4" height="4" fill="#20e020"/><rect x="632" y="184" width="4" height="4" fill="#20e020"/><rect x="647" y="216" width="4" height="4" fill="#20e020"/><path d="M1111,745h16M1119,737v16" stroke="#e8e820" stroke-width="1.6"/><path d="M140.0,505.0 C143.2,508.2 139.1,507.3 159.0,524.0 C178.9,540.7 229.4,585.2 259.2,605.3 C289.0,625.4 303.4,631.7 337.7,644.6 C372.0,657.5 425.7,673.5 465.0,682.5 C504.3,691.5 544.9,695.6 573.4,698.8 C601.9,702.0 611.3,701.7 636.0,701.5 C660.7,701.3 689.8,701.2 721.7,697.4 C753.6,693.6 794.6,686.1 827.5,678.6 C860.4,671.1 890.0,663.2 918.8,652.2 C947.5,641.2 978.7,623.7 1000.0,612.5 C1021.3,601.3 1027.9,598.8 1046.5,585.0 C1065.1,571.2 1098.3,541.3 1111.4,529.6 C1124.5,517.9 1122.7,517.4 1125.0,515.0" fill="none" stroke="#e81010" stroke-width="2.6"/><rect x="636.5" y="153" width="2" height="250" fill="#b0b0ff"/><rect x="635.5" y="403" width="2" height="365" fill="#a8a8f0"/><rect x="972.7" y="526.0" width="8" height="8" fill="none" stroke="#9a1a1a" stroke-width="1"/><rect x="971.0" y="536.0" width="8" height="8" fill="none" stroke="#9a1a1a" stroke-width="1"/><rect x="975.3" y="542.0" width="8" height="8" fill="none" stroke="#9a1a1a" stroke-width="1"/><rect x="965.3" y="556.0" width="8" height="8" fill="none" stroke="#9a1a1a" stroke-width="1"/><rect x="975.3" y="552.0" width="8" height="8" fill="none" stroke="#9a1a1a" stroke-width="1"/><rect x="980.7" y="554.0" width="22" height="22" fill="none" stroke="#9a1a1a" stroke-width="1"/><rect x="1036.0" y="571.3" width="8" height="8" fill="none" stroke="#9a1a1a" stroke-width="1"/><rect x="1027.7" y="610.0" width="8" height="8" fill="none" stroke="#9a1a1a" stroke-width="1"/><rect x="1154.3" y="566.0" width="18" height="18" fill="none" stroke="#9a1a1a" stroke-width="1"/><rect x="1144.0" y="599.0" width="22" height="22" fill="none" stroke="#9a1a1a" stroke-width="1"/><rect x="1135.0" y="603.7" width="8" height="8" fill="none" stroke="#9a1a1a" stroke-width="1"/><rect x="1168.3" y="597.7" width="8" height="8" fill="none" stroke="#9a1a1a" stroke-width="1"/><rect x="1135.0" y="617.7" width="8" height="8" fill="none" stroke="#9a1a1a" stroke-width="1"/><rect x="1120.0" y="649.3" width="8" height="8" fill="none" stroke="#9a1a1a" stroke-width="1"/><rect x="1102.7" y="671.0" width="8" height="8" fill="none" stroke="#9a1a1a" stroke-width="1"/><rect x="1165.3" y="738.3" width="8" height="8" fill="none" stroke="#9a1a1a" stroke-width="1"/><rect x="1147.7" y="754.3" width="8" height="8" fill="none" stroke="#9a1a1a" stroke-width="1"/><rect x="1157.7" y="754.3" width="8" height="8" fill="none" stroke="#9a1a1a" stroke-width="1"/><circle cx="1010" cy="539.3" r="3.5" fill="none" stroke="#e040e0" stroke-width="1.1"/><circle cx="1016" cy="549.3" r="3.5" fill="none" stroke="#e040e0" stroke-width="1.1"/><circle cx="1059.3" cy="581" r="4" fill="none" stroke="#e040e0" stroke-width="1.1"/><circle cx="1049.3" cy="616.7" r="3" fill="none" stroke="#e040e0" stroke-width="1.1"/><circle cx="1146.7" cy="684" r="4.5" fill="none" stroke="#e040e0" stroke-width="1.1"/><circle cx="1180" cy="650" r="4" fill="none" stroke="#e040e0" stroke-width="1.1"/><circle cx="1196.7" cy="663.3" r="3.5" fill="none" stroke="#e040e0" stroke-width="1.1"/><circle cx="1163.3" cy="711.7" r="3" fill="none" stroke="#e040e0" stroke-width="1.1"/><circle cx="1064" cy="707.3" r="3" fill="none" stroke="#e040e0" stroke-width="1.1"/><circle cx="1053.3" cy="762.7" r="3" fill="none" stroke="#e040e0" stroke-width="1.1"/><path d="M1000,584l2,2l-2,2l-2,-2z" fill="none" stroke="#d040d0" stroke-width=".8"/><path d="M1085,565l2,2l-2,2l-2,-2z" fill="none" stroke="#d040d0" stroke-width=".8"/><path d="M1078,715l2,2l-2,2l-2,-2z" fill="none" stroke="#d040d0" stroke-width=".8"/><path d="M1059,726l2,2l-2,2l-2,-2z" fill="none" stroke="#d040d0" stroke-width=".8"/><path d="M1085,688l2,2l-2,2l-2,-2z" fill="none" stroke="#d040d0" stroke-width=".8"/><path d="M1110,661l2,2l-2,2l-2,-2z" fill="none" stroke="#d040d0" stroke-width=".8"/><path d="M1030,618l2,2l-2,2l-2,-2z" fill="none" stroke="#d040d0" stroke-width=".8"/><path d="M1001,740l2,2l-2,2l-2,-2z" fill="none" stroke="#d040d0" stroke-width=".8"/><circle cx="130" cy="567" r="2.5" fill="url(#sw)" opacity=".8"/><circle cx="172.5" cy="581" r="3.3" fill="url(#sy)" opacity=".8"/><circle cx="337.7" cy="644" r="4.1" fill="url(#sr)" opacity=".8"/><circle cx="371.6" cy="676.5" r="2.5" fill="url(#sw)" opacity=".8"/><circle cx="416.3" cy="711" r="3.3" fill="url(#sy)" opacity=".8"/><circle cx="424.4" cy="753" r="4.1" fill="url(#sr)" opacity=".8"/><circle cx="278" cy="632.4" r="2.5" fill="url(#sw)" opacity=".8"/><circle cx="520.5" cy="727.2" r="3.3" fill="url(#sy)" opacity=".8"/><circle cx="254" cy="575" r="4.1" fill="url(#sr)" opacity=".8"/><circle cx="146" cy="655" r="2.5" fill="url(#sw)" opacity=".8"/><circle cx="213" cy="656" r="3.3" fill="url(#sy)" opacity=".8"/><circle cx="290" cy="585" r="4.1" fill="url(#sr)" opacity=".8"/><circle cx="495" cy="576" r="2.5" fill="url(#sw)" opacity=".8"/><circle cx="600" cy="589" r="3.3" fill="url(#sy)" opacity=".8"/><circle cx="630" cy="553" r="4.1" fill="url(#sr)" opacity=".8"/><circle cx="708" cy="538" r="2.5" fill="url(#sw)" opacity=".8"/><circle cx="720" cy="560" r="3.3" fill="url(#sy)" opacity=".8"/><circle cx="862" cy="553" r="4.1" fill="url(#sr)" opacity=".8"/><circle cx="911.6" cy="582.5" r="2.5" fill="url(#sw)" opacity=".8"/><circle cx="969.3" cy="596.4" r="3.3" fill="url(#sy)" opacity=".8"/><circle cx="866" cy="675" r="4.1" fill="url(#sr)" opacity=".8"/><circle cx="833.5" cy="712.3" r="2.5" fill="url(#sw)" opacity=".8"/><circle cx="713.3" cy="750.8" r="3.3" fill="url(#sy)" opacity=".8"/><circle cx="978" cy="724.3" r="4.1" fill="url(#sr)" opacity=".8"/><circle cx="1012.9" cy="652.2" r="2.5" fill="url(#sw)" opacity=".8"/><circle cx="1039.3" cy="635.4" r="3.3" fill="url(#sy)" opacity=".8"/><circle cx="1109" cy="651" r="4.1" fill="url(#sr)" opacity=".8"/><circle cx="1104" cy="719.5" r="2.5" fill="url(#sw)" opacity=".8"/><circle cx="1020" cy="758" r="3.3" fill="url(#sy)" opacity=".8"/><circle cx="1056" cy="643.8" r="4.1" fill="url(#sr)" opacity=".8"/><circle cx="840" cy="640" r="2.5" fill="url(#sw)" opacity=".8"/><circle cx="760" cy="620" r="3.3" fill="url(#sy)" opacity=".8"/><circle cx="820" cy="600" r="4.1" fill="url(#sr)" opacity=".8"/><circle cx="930" cy="700" r="2.5" fill="url(#sw)" opacity=".8"/><circle cx="960" cy="690" r="3.3" fill="url(#sy)" opacity=".8"/><circle cx="1120" cy="600" r="4.1" fill="url(#sr)" opacity=".8"/><circle cx="1150" cy="640" r="2.5" fill="url(#sw)" opacity=".8"/><circle cx="1180" cy="680" r="3.3" fill="url(#sy)" opacity=".8"/><circle cx="1200" cy="630" r="4.1" fill="url(#sr)" opacity=".8"/><circle cx="1220" cy="700" r="2.5" fill="url(#sw)" opacity=".8"/><circle cx="1240" cy="560" r="3.3" fill="url(#sy)" opacity=".8"/><circle cx="1030" cy="570" r="4.1" fill="url(#sr)" opacity=".8"/><circle cx="1070" cy="650" r="2.5" fill="url(#sw)" opacity=".8"/><circle cx="995" cy="540" r="3.3" fill="url(#sy)" opacity=".8"/><circle cx="1050" cy="690" r="4.1" fill="url(#sr)" opacity=".8"/><circle cx="1080" cy="620" r="2.5" fill="url(#sw)" opacity=".8"/><circle cx="580" cy="740" r="3.3" fill="url(#sy)" opacity=".8"/><circle cx="450" cy="760" r="4.1" fill="url(#sr)" opacity=".8"/><circle cx="340" cy="740" r="2.5" fill="url(#sw)" opacity=".8"/><circle cx="240" cy="700" r="3.3" fill="url(#sy)" opacity=".8"/><circle cx="170" cy="700" r="4.1" fill="url(#sr)" opacity=".8"/><circle cx="93" cy="642.6" r="2.5" fill="url(#sw)" opacity=".8"/><circle cx="60" cy="560" r="3.3" fill="url(#sy)" opacity=".8"/><circle cx="90" cy="600" r="4.1" fill="url(#sr)" opacity=".8"/><circle cx="120" cy="650" r="2.5" fill="url(#sw)" opacity=".8"/><circle cx="140" cy="690" r="3.3" fill="url(#sy)" opacity=".8"/><circle cx="929.2" cy="662.3" r="2.4" fill="url(#sr)" opacity=".75"/><circle cx="1168.8" cy="573.6" r="2.7" fill="url(#sr)" opacity=".75"/><circle cx="1131.8" cy="550.6" r="2.0" fill="url(#sy)" opacity=".75"/><circle cx="980.5" cy="741.7" r="2.6" fill="url(#sw)" opacity=".75"/><circle cx="895.7" cy="636.7" r="2.7" fill="url(#sw)" opacity=".75"/><circle cx="1154.9" cy="543.2" r="2.1" fill="url(#sw)" opacity=".75"/><circle cx="922.1" cy="730.2" r="2.7" fill="url(#sw)" opacity=".75"/><circle cx="957.4" cy="687.0" r="2.7" fill="url(#sr)" opacity=".75"/><circle cx="902.0" cy="660.3" r="2.8" fill="url(#sw)" opacity=".75"/><circle cx="1163.7" cy="620.8" r="3.0" fill="url(#sw)" opacity=".75"/><circle cx="660.3" cy="578.3" r="2.3" fill="url(#sr)" opacity=".75"/><circle cx="1081.8" cy="628.7" r="2.9" fill="url(#sw)" opacity=".75"/><circle cx="992.8" cy="635.4" r="3.2" fill="url(#sw)" opacity=".75"/><circle cx="1117.9" cy="628.6" r="2.0" fill="url(#sr)" opacity=".75"/><circle cx="910.3" cy="579.1" r="3.0" fill="url(#sy)" opacity=".75"/><circle cx="1003.3" cy="538.1" r="2.1" fill="url(#sw)" opacity=".75"/><circle cx="1006.7" cy="586.3" r="2.3" fill="url(#sy)" opacity=".75"/><circle cx="929.7" cy="758.2" r="3.0" fill="url(#sr)" opacity=".75"/><circle cx="1091.6" cy="566.0" r="2.8" fill="url(#sw)" opacity=".75"/><circle cx="910.4" cy="745.2" r="2.2" fill="url(#sr)" opacity=".75"/><circle cx="795.9" cy="662.2" r="2.2" fill="url(#sw)" opacity=".75"/><circle cx="1205.8" cy="577.0" r="1.9" fill="url(#sw)" opacity=".75"/><circle cx="904.8" cy="587.8" r="2.0" fill="url(#sw)" opacity=".75"/><circle cx="875.5" cy="741.8" r="2.6" fill="url(#sw)" opacity=".75"/><circle cx="1209.5" cy="642.0" r="2.8" fill="url(#sy)" opacity=".75"/><circle cx="1232.8" cy="533.1" r="2.5" fill="url(#sw)" opacity=".75"/><circle cx="1094.6" cy="604.5" r="1.9" fill="url(#sw)" opacity=".75"/><circle cx="984.9" cy="704.9" r="2.9" fill="url(#sw)" opacity=".75"/><circle cx="1204.4" cy="612.4" r="3.1" fill="url(#sr)" opacity=".75"/><circle cx="1178.3" cy="628.1" r="3.0" fill="url(#sw)" opacity=".75"/><circle cx="1000.8" cy="678.0" r="2.3" fill="url(#sr)" opacity=".75"/><circle cx="856.4" cy="752.2" r="2.4" fill="url(#sr)" opacity=".75"/><circle cx="1158.8" cy="548.1" r="2.2" fill="url(#sw)" opacity=".75"/><circle cx="712.2" cy="533.3" r="2.5" fill="url(#sw)" opacity=".75"/><circle cx="1025.6" cy="748.9" r="3.1" fill="url(#sy)" opacity=".75"/><circle cx="968.4" cy="708.9" r="2.7" fill="url(#sy)" opacity=".75"/><circle cx="922.9" cy="742.0" r="2.4" fill="url(#sy)" opacity=".75"/><circle cx="809.1" cy="680.2" r="3.0" fill="url(#sw)" opacity=".75"/><circle cx="741.0" cy="647.2" r="2.8" fill="url(#sw)" opacity=".75"/><circle cx="1225.3" cy="594.4" r="2.0" fill="url(#sw)" opacity=".75"/><circle cx="940.5" cy="750.2" r="2.3" fill="url(#sr)" opacity=".75"/><circle cx="969.4" cy="689.3" r="2.2" fill="url(#sr)" opacity=".75"/><circle cx="1153.1" cy="594.7" r="2.7" fill="url(#sw)" opacity=".75"/><circle cx="995.6" cy="681.8" r="2.4" fill="url(#sr)" opacity=".75"/><circle cx="925.7" cy="679.2" r="3.1" fill="url(#sy)" opacity=".75"/><circle cx="1067.3" cy="575.8" r="2.2" fill="url(#sr)" opacity=".75"/><circle cx="1085.0" cy="709.2" r="2.1" fill="url(#sw)" opacity=".75"/><circle cx="822.1" cy="611.0" r="2.4" fill="url(#sw)" opacity=".75"/><circle cx="1131.2" cy="745.5" r="2.4" fill="url(#sw)" opacity=".75"/><circle cx="1191.1" cy="621.1" r="2.4" fill="url(#sr)" opacity=".75"/><circle cx="1032.2" cy="746.4" r="2.6" fill="url(#sr)" opacity=".75"/><circle cx="1048.3" cy="648.6" r="2.4" fill="url(#sy)" opacity=".75"/><circle cx="1047.5" cy="577.2" r="2.1" fill="url(#sw)" opacity=".75"/><circle cx="1130.5" cy="604.9" r="2.3" fill="url(#sw)" opacity=".75"/><circle cx="1117.1" cy="645.0" r="2.1" fill="url(#sw)" opacity=".75"/><circle cx="1176.2" cy="630.9" r="2.0" fill="url(#sw)" opacity=".75"/><circle cx="748.5" cy="652.0" r="3.1" fill="url(#sr)" opacity=".75"/><circle cx="953.1" cy="755.8" r="2.9" fill="url(#sw)" opacity=".75"/><circle cx="921.5" cy="662.1" r="2.5" fill="url(#sw)" opacity=".75"/><circle cx="1162.0" cy="662.4" r="2.7" fill="url(#sy)" opacity=".75"/><circle cx="1022.6" cy="601.1" r="3.2" fill="url(#sw)" opacity=".75"/><circle cx="971.9" cy="665.5" r="2.4" fill="url(#sw)" opacity=".75"/><circle cx="980.3" cy="538.5" r="2.6" fill="url(#sr)" opacity=".75"/><circle cx="715.5" cy="568.0" r="2.4" fill="url(#sr)" opacity=".75"/><circle cx="918.0" cy="723.8" r="2.5" fill="url(#sr)" opacity=".75"/><circle cx="814.8" cy="696.5" r="2.1" fill="url(#sw)" opacity=".75"/><circle cx="1094.9" cy="557.5" r="2.8" fill="url(#sy)" opacity=".75"/><circle cx="1077.3" cy="738.9" r="2.3" fill="url(#sw)" opacity=".75"/><circle cx="906.0" cy="655.0" r="2.6" fill="url(#sw)" opacity=".75"/><circle cx="1174.0" cy="656.2" r="2.5" fill="url(#sw)" opacity=".75"/><circle cx="1166.5" cy="674.8" r="2.1" fill="url(#sw)" opacity=".75"/><circle cx="1100.8" cy="722.5" r="2.2" fill="url(#sw)" opacity=".75"/><circle cx="215.3" cy="749.5" r="2.5" fill="url(#sw)" opacity=".7"/><circle cx="140.6" cy="551.2" r="1.8" fill="url(#sw)" opacity=".7"/><circle cx="74.6" cy="621.1" r="2.6" fill="url(#sy)" opacity=".7"/><circle cx="281.4" cy="717.6" r="1.8" fill="url(#sw)" opacity=".7"/><circle cx="409.4" cy="719.7" r="1.8" fill="url(#sw)" opacity=".7"/><circle cx="443.1" cy="746.7" r="1.7" fill="url(#sy)" opacity=".7"/><circle cx="333.5" cy="710.0" r="2.8" fill="url(#sr)" opacity=".7"/><circle cx="536.4" cy="720.7" r="1.7" fill="url(#sy)" opacity=".7"/><circle cx="339.2" cy="664.5" r="1.8" fill="url(#sw)" opacity=".7"/><circle cx="91.3" cy="569.4" r="2.8" fill="url(#sw)" opacity=".7"/><circle cx="594.7" cy="550.9" r="1.8" fill="url(#sw)" opacity=".7"/><circle cx="442.2" cy="546.6" r="2.0" fill="url(#sw)" opacity=".7"/><circle cx="309.5" cy="651.7" r="1.9" fill="url(#sy)" opacity=".7"/><circle cx="251.4" cy="680.2" r="2.6" fill="url(#sw)" opacity=".7"/><circle cx="132.4" cy="636.9" r="2.0" fill="url(#sr)" opacity=".7"/><circle cx="591.6" cy="673.2" r="2.2" fill="url(#sw)" opacity=".7"/><circle cx="517.1" cy="697.1" r="2.7" fill="url(#sr)" opacity=".7"/><circle cx="373.2" cy="573.8" r="2.8" fill="url(#sr)" opacity=".7"/><circle cx="519.0" cy="590.0" r="2.5" fill="url(#sw)" opacity=".7"/><circle cx="502.4" cy="723.5" r="1.8" fill="url(#sy)" opacity=".7"/><circle cx="224.5" cy="657.3" r="2.5" fill="url(#sy)" opacity=".7"/><circle cx="494.4" cy="625.4" r="1.8" fill="url(#sr)" opacity=".7"/><circle cx="514.3" cy="600.4" r="1.6" fill="url(#sw)" opacity=".7"/><circle cx="240.5" cy="681.3" r="1.7" fill="url(#sr)" opacity=".7"/><circle cx="189.2" cy="758.7" r="2.0" fill="url(#sy)" opacity=".7"/><circle cx="429.1" cy="664.7" r="1.7" fill="url(#sr)" opacity=".7"/><circle cx="339.1" cy="647.4" r="2.4" fill="url(#sw)" opacity=".7"/><circle cx="492.3" cy="763.2" r="1.7" fill="url(#sw)" opacity=".7"/><circle cx="87.0" cy="584.9" r="2.1" fill="url(#sy)" opacity=".7"/><circle cx="51.3" cy="574.9" r="1.6" fill="url(#sy)" opacity=".7"/><circle cx="180.3" cy="594.2" r="2.3" fill="url(#sy)" opacity=".7"/><circle cx="334.8" cy="760.1" r="2.6" fill="url(#sr)" opacity=".7"/><circle cx="81.8" cy="634.6" r="1.7" fill="url(#sr)" opacity=".7"/><circle cx="390.5" cy="710.2" r="2.1" fill="url(#sw)" opacity=".7"/><circle cx="601.9" cy="620.6" r="2.6" fill="url(#sw)" opacity=".7"/><circle cx="356.0" cy="671.2" r="2.7" fill="url(#sy)" opacity=".7"/><circle cx="280.8" cy="654.4" r="2.0" fill="url(#sr)" opacity=".7"/><circle cx="348.9" cy="644.0" r="2.3" fill="url(#sy)" opacity=".7"/><circle cx="195.8" cy="700.0" r="1.6" fill="url(#sy)" opacity=".7"/><circle cx="498.9" cy="668.6" r="1.8" fill="url(#sr)" opacity=".7"/><circle cx="487.9" cy="621.6" r="2.5" fill="url(#sy)" opacity=".7"/><circle cx="605.6" cy="545.6" r="2.1" fill="url(#sw)" opacity=".7"/><circle cx="316.1" cy="761.6" r="1.7" fill="url(#sw)" opacity=".7"/><circle cx="583.9" cy="562.6" r="2.3" fill="url(#sw)" opacity=".7"/><circle cx="91.4" cy="677.8" r="1.7" fill="url(#sy)" opacity=".7"/><circle cx="553.9" cy="613.6" r="1.7" fill="url(#sw)" opacity=".7"/><circle cx="294.6" cy="688.3" r="2.3" fill="url(#sy)" opacity=".7"/><circle cx="416.5" cy="691.7" r="2.5" fill="url(#sy)" opacity=".7"/><circle cx="349.1" cy="767.4" r="2.5" fill="url(#sy)" opacity=".7"/><circle cx="167.8" cy="555.3" r="2.5" fill="url(#sy)" opacity=".7"/><circle cx="407.5" cy="614.2" r="2.3" fill="url(#sy)" opacity=".7"/><circle cx="469.5" cy="695.8" r="2.4" fill="url(#sw)" opacity=".7"/><circle cx="487.1" cy="573.6" r="2.2" fill="url(#sw)" opacity=".7"/><circle cx="424.8" cy="575.0" r="1.6" fill="url(#sr)" opacity=".7"/><circle cx="57.7" cy="593.0" r="1.6" fill="url(#sy)" opacity=".7"/><circle cx="43.6" cy="581.4" r="1.7" fill="url(#sy)" opacity=".7"/><rect x="126" y="690" width="2" height="2" fill="#e02020"/><rect x="279" y="610" width="2" height="2" fill="#e02020"/><rect x="282" y="629" width="1" height="3" fill="#e02020"/><rect x="695" y="707" width="1" height="2" fill="#e02020"/><rect x="401" y="746" width="2" height="1" fill="#e02020"/><rect x="423" y="739" width="1" height="2" fill="#e02020"/><rect x="828" y="606" width="1" height="3" fill="#e02020"/><rect x="720" y="748" width="1" height="3" fill="#e02020"/><rect x="292" y="760" width="2" height="2" fill="#e02020"/><rect x="124" y="727" width="1" height="2" fill="#e02020"/><rect x="210" y="669" width="1" height="2" fill="#e02020"/><rect x="130" y="637" width="1" height="1" fill="#e02020"/><rect x="292" y="541" width="1" height="2" fill="#e02020"/><rect x="505" y="608" width="1" height="2" fill="#e02020"/><rect x="627" y="656" width="2" height="1" fill="#e02020"/><rect x="1036" y="688" width="1" height="3" fill="#e02020"/><rect x="664" y="698" width="1" height="3" fill="#e02020"/><rect x="499" y="655" width="1" height="1" fill="#e02020"/><rect x="600" y="703" width="1" height="2" fill="#e02020"/><rect x="584" y="668" width="1" height="2" fill="#e02020"/><rect x="154" y="571" width="1" height="2" fill="#e02020"/><rect x="564" y="743" width="1" height="2" fill="#e02020"/><rect x="515" y="757" width="2" height="1" fill="#e02020"/><rect x="614" y="580" width="1" height="2" fill="#e02020"/><rect x="494" y="654" width="2" height="2" fill="#e02020"/><rect x="989" y="541" width="1" height="2" fill="#e02020"/><rect x="574" y="586" width="1" height="2" fill="#e02020"/><rect x="531" y="713" width="1" height="2" fill="#e02020"/><rect x="85" y="665" width="1" height="1" fill="#e02020"/><rect x="271" y="748" width="1" height="2" fill="#e02020"/><rect x="121" y="592" width="2" height="1" fill="#e02020"/><rect x="43" y="572" width="1" height="1" fill="#e02020"/><rect x="528" y="646" width="1" height="2" fill="#e02020"/><rect x="402" y="545" width="1" height="3" fill="#e02020"/><rect x="193" y="688" width="2" height="3" fill="#e02020"/><rect x="568" y="735" width="2" height="3" fill="#e02020"/><rect x="312" y="663" width="1" height="1" fill="#e02020"/><rect x="1173" y="708" width="2" height="1" fill="#e02020"/><rect x="335" y="575" width="2" height="1" fill="#e02020"/><rect x="425" y="755" width="2" height="3" fill="#e02020"/><rect x="193" y="550" width="2" height="2" fill="#e02020"/><rect x="241" y="624" width="1" height="1" fill="#e02020"/><rect x="144" y="535" width="1" height="3" fill="#e02020"/><rect x="520" y="545" width="1" height="2" fill="#e02020"/><rect x="816" y="712" width="1" height="3" fill="#e02020"/><rect x="428" y="626" width="1" height="3" fill="#e02020"/><rect x="321" y="765" width="2" height="1" fill="#e02020"/><rect x="341" y="572" width="1" height="3" fill="#e02020"/><rect x="151" y="618" width="2" height="2" fill="#e02020"/><rect x="215" y="712" width="1" height="2" fill="#e02020"/><rect x="454" y="648" width="1" height="2" fill="#e02020"/><rect x="122" y="586" width="2" height="3" fill="#e02020"/><rect x="877" y="606" width="1" height="2" fill="#e02020"/><rect x="590" y="557" width="2" height="2" fill="#e02020"/><rect x="314" y="664" width="2" height="1" fill="#e02020"/><rect x="709" y="591" width="1" height="2" fill="#e02020"/><rect x="171" y="726" width="1" height="2" fill="#e02020"/><rect x="316" y="665" width="1" height="2" fill="#e02020"/><rect x="516" y="716" width="2" height="2" fill="#e02020"/><rect x="398" y="689" width="2" height="3" fill="#e02020"/><rect x="215" y="626" width="1" height="2" fill="#e02020"/><rect x="434" y="559" width="1" height="2" fill="#e02020"/><rect x="632" y="552" width="1" height="3" fill="#e02020"/><rect x="521" y="595" width="1" height="3" fill="#e02020"/><rect x="537" y="533" width="1" height="2" fill="#e02020"/><rect x="570" y="648" width="1" height="1" fill="#e02020"/><rect x="605" y="552" width="1" height="2" fill="#e02020"/><rect x="828" y="754" width="2" height="2" fill="#e02020"/><rect x="388" y="605" width="1" height="3" fill="#e02020"/><rect x="458" y="668" width="1" height="2" fill="#e02020"/><rect x="399" y="647" width="1" height="2" fill="#e02020"/><rect x="269" y="734" width="2" height="1" fill="#e02020"/><rect x="260" y="729" width="1" height="3" fill="#e02020"/><rect x="311" y="756" width="1" height="1" fill="#e02020"/><rect x="396" y="724" width="1" height="3" fill="#e02020"/><rect x="295" y="601" width="2" height="2" fill="#e02020"/><rect x="351" y="701" width="2" height="2" fill="#e02020"/><rect x="390" y="750" width="2" height="2" fill="#e02020"/><rect x="361" y="681" width="1" height="3" fill="#e02020"/><rect x="694" y="572" width="1" height="3" fill="#e02020"/><rect x="615" y="535" width="1" height="2" fill="#e02020"/><rect x="556" y="688" width="2" height="2" fill="#e02020"/><rect x="622" y="580" width="2" height="3" fill="#e02020"/><rect x="341" y="576" width="2" height="1" fill="#e02020"/><rect x="207" y="531" width="1" height="3" fill="#e02020"/><rect x="640" y="701" width="1" height="1" fill="#e02020"/><rect x="161" y="570" width="2" height="2" fill="#e02020"/><rect x="325" y="647" width="2" height="3" fill="#e02020"/><rect x="95" y="626" width="1" height="2" fill="#e02020"/><rect x="524" y="654" width="1" height="3" fill="#e02020"/><rect x="704" y="641" width="1" height="2" fill="#e02020"/><rect x="384" y="556" width="1" height="3" fill="#e02020"/><rect x="588" y="752" width="1" height="2" fill="#e02020"/><rect x="435" y="763" width="2" height="2" fill="#e02020"/><rect x="69" y="624" width="2" height="1" fill="#e02020"/><rect x="927" y="664" width="1" height="3" fill="#e02020"/><rect x="486" y="539" width="1" height="2" fill="#e02020"/><rect x="323" y="718" width="1" height="3" fill="#e02020"/><rect x="270" y="579" width="1" height="2" fill="#e02020"/><rect x="601" y="645" width="2" height="2" fill="#e02020"/><rect x="110" y="694" width="1" height="2" fill="#e02020"/><rect x="288" y="552" width="1" height="2" fill="#e02020"/><rect x="316" y="729" width="1" height="1" fill="#e02020"/><rect x="573" y="733" width="1" height="2" fill="#e02020"/><rect x="335" y="739" width="2" height="1" fill="#e02020"/><rect x="392" y="674" width="1" height="1" fill="#e02020"/><rect x="251" y="651" width="1" height="1" fill="#e02020"/><rect x="276" y="626" width="1" height="2" fill="#e02020"/><rect x="576" y="618" width="1" height="2" fill="#e02020"/><rect x="476" y="674" width="1" height="1" fill="#e02020"/><rect x="170" y="714" width="1" height="2" fill="#e02020"/><rect x="167" y="646" width="1" height="3" fill="#e02020"/><rect x="293" y="750" width="1" height="3" fill="#e02020"/><rect x="660" y="706" width="1" height="3" fill="#e02020"/><rect x="468" y="542" width="1" height="2" fill="#e02020"/><rect x="87" y="646" width="2" height="2" fill="#e02020"/><rect x="597" y="605" width="1" height="1" fill="#e02020"/><rect x="531" y="594" width="1" height="3" fill="#e02020"/><rect x="490" y="746" width="1" height="2" fill="#e02020"/><rect x="602" y="532" width="2" height="2" fill="#e02020"/><rect x="352" y="589" width="1" height="2" fill="#e02020"/><rect x="660" y="750" width="1" height="2" fill="#e02020"/><rect x="117" y="725" width="2" height="2" fill="#e02020"/><rect x="345" y="552" width="1" height="2" fill="#e02020"/><rect x="212" y="573" width="1" height="2" fill="#e02020"/><rect x="430" y="693" width="2" height="2" fill="#e02020"/><rect x="475" y="596" width="2" height="3" fill="#e02020"/><rect x="312" y="587" width="1" height="2" fill="#e02020"/><rect x="1148" y="705" width="1" height="2" fill="#e02020"/><rect x="159" y="636" width="2" height="3" fill="#e02020"/><rect x="70" y="677" width="1" height="3" fill="#e02020"/><rect x="86" y="588" width="2" height="3" fill="#e02020"/><rect x="331" y="680" width="1" height="2" fill="#e02020"/><rect x="246" y="733" width="1" height="2" fill="#e02020"/><rect x="786" y="727" width="1" height="2" fill="#e02020"/><rect x="484" y="688" width="1" height="2" fill="#e02020"/><rect x="873" y="718" width="1" height="2" fill="#e02020"/><rect x="536" y="679" width="1" height="3" fill="#e02020"/><rect x="80" y="699" width="1" height="1" fill="#e02020"/><rect x="258" y="613" width="2" height="1" fill="#e02020"/><rect x="518" y="745" width="2" height="3" fill="#e02020"/><rect x="231" y="543" width="1" height="2" fill="#e02020"/><rect x="295" y="701" width="1" height="2" fill="#e02020"/><rect x="874" y="659" width="1" height="3" fill="#e02020"/><rect x="235" y="553" width="1" height="3" fill="#e02020"/><rect x="552" y="564" width="1" height="2" fill="#e02020"/><rect x="357" y="582" width="1" height="2" fill="#e02020"/><rect x="470" y="590" width="1" height="2" fill="#e02020"/><rect x="400" y="546" width="1" height="2" fill="#e02020"/><rect x="615" y="767" width="1" height="3" fill="#e02020"/><rect x="616" y="627" width="2" height="3" fill="#e02020"/><rect x="378" y="587" width="1" height="1" fill="#e02020"/><rect x="236" y="533" width="1" height="1" fill="#e02020"/><rect x="674" y="687" width="1" height="3" fill="#e02020"/><rect x="515" y="697" width="1" height="1" fill="#e02020"/><rect x="418" y="702" width="2" height="2" fill="#e02020"/><rect x="455" y="594" width="2" height="2" fill="#e02020"/><rect x="242" y="538" width="1" height="2" fill="#e02020"/><rect x="196" y="611" width="1" height="1" fill="#e02020"/><rect x="516" y="604" width="2" height="2" fill="#e02020"/><rect x="46" y="569" width="1" height="1" fill="#e02020"/><rect x="500" y="749" width="1" height="2" fill="#e02020"/><rect x="899" y="629" width="1" height="1" fill="#e02020"/><rect x="303" y="672" width="2" height="1" fill="#e02020"/><rect x="570" y="670" width="2" height="1" fill="#e02020"/><rect x="405" y="705" width="2" height="3" fill="#e02020"/><rect x="250" y="750" width="1" height="1" fill="#e02020"/><rect x="207" y="615" width="1" height="2" fill="#e02020"/><rect x="65" y="610" width="1" height="2" fill="#e02020"/><rect x="164" y="571" width="1" height="1" fill="#e02020"/><rect x="262" y="688" width="1" height="3" fill="#e02020"/><rect x="408" y="679" width="1" height="2" fill="#e02020"/><rect x="163" y="754" width="2" height="2" fill="#e02020"/><rect x="398" y="529" width="1" height="2" fill="#e02020"/><rect x="522" y="562" width="2" height="2" fill="#e02020"/><rect x="542" y="725" width="1" height="2" fill="#e02020"/><rect x="582" y="649" width="1" height="2" fill="#e02020"/><rect x="165" y="557" width="1" height="1" fill="#e02020"/><rect x="852" y="637" width="1" height="2" fill="#e02020"/><rect x="99" y="628" width="1" height="3" fill="#e02020"/><rect x="362" y="552" width="2" height="1" fill="#e02020"/><rect x="691" y="551" width="1" height="2" fill="#e02020"/><rect x="40" y="534" width="2" height="2" fill="#e02020"/><rect x="109" y="568" width="2" height="2" fill="#e02020"/><rect x="610" y="684" width="1" height="2" fill="#e02020"/><rect x="506" y="727" width="2" height="1" fill="#e02020"/><rect x="589" y="624" width="2" height="2" fill="#e02020"/><rect x="212" y="616" width="1" height="1" fill="#e02020"/><rect x="154" y="627" width="2" height="1" fill="#e02020"/><rect x="103" y="584" width="2" height="1" fill="#e02020"/><rect x="322" y="669" width="1" height="1" fill="#e02020"/><rect x="229" y="552" width="1" height="1" fill="#e02020"/><rect x="166" y="725" width="1" height="2" fill="#e02020"/><rect x="483" y="598" width="2" height="1" fill="#e02020"/><rect x="518" y="646" width="2" height="1" fill="#e02020"/><rect x="499" y="599" width="1" height="2" fill="#e02020"/><rect x="190" y="764" width="1" height="3" fill="#e02020"/><rect x="291" y="547" width="1" height="3" fill="#e02020"/><rect x="461" y="631" width="1" height="1" fill="#e02020"/><rect x="96" y="654" width="2" height="2" fill="#e02020"/><rect x="512" y="581" width="1" height="2" fill="#e02020"/><rect x="60" y="614" width="1" height="3" fill="#e02020"/><rect x="149" y="693" width="1" height="2" fill="#e02020"/><rect x="470" y="671" width="1" height="2" fill="#e02020"/><rect x="278" y="711" width="1" height="2" fill="#e02020"/><rect x="246" y="555" width="1" height="1" fill="#e02020"/><rect x="479" y="549" width="2" height="1" fill="#e02020"/><rect x="125" y="764" width="1" height="2" fill="#e02020"/><rect x="60" y="563" width="1" height="2" fill="#e02020"/><rect x="79" y="678" width="2" height="2" fill="#e02020"/><rect x="535" y="691" width="1" height="2" fill="#e02020"/><rect x="485" y="635" width="1" height="1" fill="#e02020"/><rect x="567" y="743" width="2" height="1" fill="#e02020"/><rect x="509" y="694" width="2" height="1" fill="#e02020"/><rect x="551" y="618" width="2" height="3" fill="#e02020"/><rect x="627" y="693" width="1" height="3" fill="#e02020"/><rect x="149" y="706" width="1" height="2" fill="#e02020"/><rect x="269" y="610" width="1" height="2" fill="#e02020"/><rect x="484" y="721" width="2" height="3" fill="#e02020"/><rect x="577" y="669" width="1" height="2" fill="#e02020"/><rect x="508" y="549" width="1" height="2" fill="#e02020"/><rect x="282" y="746" width="1" height="2" fill="#e02020"/><rect x="581" y="644" width="1" height="2" fill="#e02020"/><rect x="206" y="756" width="1" height="2" fill="#e02020"/><rect x="140" y="716" width="1" height="2" fill="#e02020"/><rect x="221" y="573" width="1" height="2" fill="#e02020"/><rect x="868" y="615" width="2" height="2" fill="#e02020"/><rect x="768" y="727" width="1" height="2" fill="#e02020"/><rect x="460" y="569" width="1" height="2" fill="#e02020"/><rect x="372" y="662" width="1" height="3" fill="#e02020"/><rect x="113" y="534" width="1" height="2" fill="#e02020"/><rect x="1095" y="566" width="2" height="1" fill="#e02020"/><rect x="340" y="540" width="1" height="2" fill="#e02020"/><rect x="612" y="692" width="1" height="2" fill="#e02020"/><rect x="449" y="583" width="2" height="1" fill="#e02020"/><rect x="392" y="528" width="2" height="1" fill="#e02020"/><rect x="260" y="616" width="1" height="2" fill="#e02020"/><rect x="96" y="688" width="1" height="2" fill="#e02020"/><rect x="115" y="654" width="1" height="1" fill="#e02020"/><rect x="263" y="697" width="1" height="2" fill="#e02020"/><rect x="618" y="546" width="1" height="1" fill="#e02020"/><rect x="186" y="599" width="1" height="2" fill="#e02020"/><rect x="884" y="753" width="1" height="3" fill="#e02020"/><rect x="157" y="736" width="1" height="3" fill="#e02020"/><rect x="104" y="718" width="1" height="2" fill="#e02020"/><rect x="521" y="608" width="1" height="3" fill="#e02020"/><rect x="343" y="668" width="2" height="2" fill="#e02020"/><rect x="280" y="636" width="1" height="2" fill="#e02020"/><rect x="247" y="690" width="2" height="2" fill="#e02020"/><rect x="47" y="602" width="1" height="2" fill="#e02020"/><rect x="62" y="587" width="1" height="1" fill="#e02020"/><rect x="75" y="661" width="1" height="2" fill="#e02020"/><rect x="845" y="583" width="1" height="3" fill="#e02020"/><rect x="84" y="535" width="1" height="3" fill="#e02020"/><rect x="168" y="593" width="1" height="2" fill="#e02020"/><rect x="415" y="667" width="1" height="3" fill="#e02020"/><rect x="294" y="545" width="1" height="2" fill="#e02020"/><rect x="217" y="607" width="2" height="1" fill="#e02020"/><rect x="382" y="718" width="2" height="3" fill="#e02020"/><rect x="451" y="767" width="1" height="3" fill="#e02020"/><rect x="68" y="563" width="1" height="1" fill="#e02020"/><rect x="560" y="668" width="2" height="1" fill="#e02020"/><rect x="367" y="538" width="1" height="2" fill="#e02020"/><rect x="98" y="533" width="1" height="1" fill="#e02020"/><rect x="225" y="761" width="1" height="2" fill="#e02020"/><rect x="328" y="706" width="1" height="2" fill="#e02020"/><rect x="197" y="667" width="2" height="3" fill="#e02020"/><rect x="548" y="668" width="1" height="2" fill="#e02020"/><rect x="596" y="662" width="1" height="2" fill="#e02020"/><rect x="517" y="696" width="1" height="2" fill="#e02020"/><rect x="610" y="554" width="2" height="3" fill="#e02020"/><rect x="632" y="731" width="2" height="3" fill="#e02020"/><rect x="89" y="604" width="2" height="3" fill="#e02020"/><rect x="96" y="561" width="1" height="2" fill="#e02020"/><rect x="82" y="668" width="1" height="1" fill="#e02020"/><rect x="333" y="745" width="2" height="1" fill="#e02020"/><rect x="544" y="661" width="1" height="3" fill="#e02020"/><rect x="839" y="648" width="2" height="2" fill="#e02020"/><rect x="899" y="538" width="2" height="2" fill="#e02020"/><rect x="599" y="682" width="2" height="3" fill="#e02020"/><rect x="841" y="553" width="1" height="2" fill="#e02020"/><rect x="333" y="674" width="1" height="2" fill="#e02020"/><rect x="521" y="622" width="1" height="2" fill="#e02020"/><rect x="493" y="612" width="1" height="2" fill="#e02020"/><rect x="635" y="763" width="1" height="1" fill="#e02020"/><rect x="356" y="572" width="2" height="2" fill="#e02020"/><rect x="1191" y="676" width="1" height="1" fill="#e02020"/><rect x="364" y="653" width="1" height="1" fill="#e02020"/><rect x="327" y="575" width="2" height="2" fill="#e02020"/><rect x="317" y="606" width="1" height="2" fill="#e02020"/><rect x="84" y="613" width="2" height="3" fill="#e02020"/><rect x="285" y="749" width="1" height="1" fill="#e02020"/><rect x="170" y="631" width="2" height="3" fill="#e02020"/><rect x="329" y="657" width="1" height="1" fill="#e02020"/><rect x="253" y="712" width="1" height="2" fill="#e02020"/><rect x="246" y="761" width="2" height="2" fill="#e02020"/><rect x="350" y="719" width="1" height="1" fill="#e02020"/><rect x="582" y="631" width="1" height="3" fill="#e02020"/><rect x="258" y="588" width="1" height="1" fill="#e02020"/><rect x="776" y="736" width="1" height="2" fill="#e02020"/><rect x="516" y="684" width="2" height="3" fill="#e02020"/><rect x="178" y="540" width="1" height="3" fill="#e02020"/><rect x="41" y="545" width="1" height="3" fill="#e02020"/><rect x="932" y="765" width="2" height="1" fill="#e02020"/><rect x="433" y="532" width="2" height="3" fill="#e02020"/><rect x="62" y="549" width="1" height="3" fill="#e02020"/><rect x="275" y="687" width="1" height="3" fill="#e02020"/><rect x="555" y="578" width="1" height="3" fill="#e02020"/><rect x="299" y="582" width="2" height="3" fill="#e02020"/><rect x="555" y="684" width="1" height="1" fill="#e02020"/><rect x="292" y="623" width="1" height="3" fill="#e02020"/><rect x="94" y="667" width="1" height="3" fill="#e02020"/><rect x="608" y="589" width="2" height="3" fill="#e02020"/><rect x="376" y="721" width="1" height="2" fill="#e02020"/><rect x="141" y="539" width="1" height="3" fill="#e02020"/><rect x="871" y="693" width="1" height="2" fill="#e02020"/><rect x="200" y="666" width="2" height="1" fill="#e02020"/><rect x="274" y="533" width="1" height="1" fill="#e02020"/><rect x="875" y="534" width="1" height="2" fill="#e02020"/><rect x="1018" y="745" width="1" height="3" fill="#e02020"/><rect x="244" y="670" width="1" height="3" fill="#e02020"/><rect x="457" y="697" width="1" height="2" fill="#e02020"/><rect x="301" y="700" width="1" height="1" fill="#e02020"/><rect x="419" y="670" width="1" height="3" fill="#e02020"/><rect x="97" y="552" width="1" height="2" fill="#e02020"/><rect x="292" y="532" width="1" height="2" fill="#e02020"/><rect x="389" y="531" width="1" height="2" fill="#e02020"/><rect x="532" y="569" width="1" height="1" fill="#e02020"/><rect x="220" y="550" width="2" height="2" fill="#e02020"/><rect x="404" y="741" width="2" height="3" fill="#e02020"/><rect x="500" y="648" width="1" height="3" fill="#e02020"/><rect x="390" y="535" width="1" height="3" fill="#e02020"/><rect x="371" y="573" width="2" height="3" fill="#e02020"/><rect x="509" y="660" width="2" height="2" fill="#e02020"/><rect x="111" y="587" width="1" height="3" fill="#e02020"/><rect x="653" y="602" width="2" height="2" fill="#e02020"/><rect x="202" y="621" width="2" height="1" fill="#e02020"/><rect x="571" y="766" width="1" height="1" fill="#e02020"/><rect x="570" y="658" width="1" height="1" fill="#e02020"/><rect x="403" y="570" width="2" height="1" fill="#e02020"/><rect x="443" y="702" width="2" height="2" fill="#e02020"/><rect x="1110" y="682" width="2" height="2" fill="#e02020"/><rect x="413" y="555" width="1" height="1" fill="#e02020"/><rect x="497" y="683" width="1" height="3" fill="#e02020"/><rect x="353" y="575" width="1" height="1" fill="#e02020"/><rect x="330" y="695" width="1" height="2" fill="#e02020"/><rect x="525" y="669" width="1" height="2" fill="#e02020"/><rect x="80" y="534" width="2" height="2" fill="#e02020"/><rect x="706" y="621" width="2" height="2" fill="#e02020"/><rect x="271" y="530" width="2" height="2" fill="#e02020"/><rect x="572" y="644" width="1" height="1" fill="#e02020"/><rect x="492" y="581" width="1" height="3" fill="#e02020"/><rect x="202" y="566" width="1" height="1" fill="#e02020"/><rect x="317" y="683" width="1" height="1" fill="#e02020"/><rect x="574" y="632" width="1" height="2" fill="#e02020"/><rect x="107" y="726" width="1" height="3" fill="#e02020"/><rect x="204" y="664" width="2" height="1" fill="#e02020"/><rect x="497" y="641" width="1" height="1" fill="#e02020"/><rect x="258" y="608" width="1" height="3" fill="#e02020"/><rect x="492" y="698" width="1" height="1" fill="#e02020"/><rect x="380" y="708" width="1" height="2" fill="#e02020"/><rect x="330" y="661" width="1" height="3" fill="#e02020"/><rect x="730" y="741" width="1" height="2" fill="#e02020"/><rect x="96" y="679" width="1" height="2" fill="#e02020"/><rect x="417" y="673" width="1" height="2" fill="#e02020"/><rect x="570" y="734" width="1" height="2" fill="#e02020"/><rect x="250" y="649" width="2" height="2" fill="#e02020"/><rect x="597" y="649" width="1" height="1" fill="#e02020"/><rect x="550" y="749" width="1" height="2" fill="#e02020"/><rect x="411" y="623" width="1" height="3" fill="#e02020"/><rect x="682" y="676" width="2" height="2" fill="#e02020"/><rect x="175" y="671" width="2" height="1" fill="#e02020"/><rect x="539" y="731" width="2" height="2" fill="#e02020"/><rect x="724" y="690" width="1" height="2" fill="#e02020"/><rect x="141" y="536" width="1" height="2" fill="#e02020"/><rect x="861" y="659" width="1" height="1" fill="#e02020"/><rect x="91" y="683" width="1" height="2" fill="#e02020"/><rect x="144" y="668" width="1" height="2" fill="#e02020"/><rect x="846" y="703" width="2" height="2" fill="#e02020"/><rect x="344" y="672" width="2" height="2" fill="#e02020"/><rect x="767" y="691" width="2" height="2" fill="#e02020"/><rect x="111" y="674" width="1" height="2" fill="#e02020"/><rect x="505" y="749" width="1" height="3" fill="#e02020"/><rect x="165" y="696" width="2" height="1" fill="#e02020"/><rect x="566" y="664" width="1" height="2" fill="#e02020"/><rect x="472" y="741" width="1" height="1" fill="#e02020"/><rect x="195" y="566" width="1" height="1" fill="#e02020"/><rect x="245" y="763" width="1" height="1" fill="#e02020"/><rect x="432" y="562" width="1" height="1" fill="#e02020"/><rect x="514" y="749" width="1" height="1" fill="#e02020"/><rect x="397" y="628" width="2" height="1" fill="#e02020"/><rect x="536" y="565" width="1" height="2" fill="#e02020"/><rect x="414" y="701" width="1" height="2" fill="#e02020"/><rect x="192" y="659" width="2" height="2" fill="#e02020"/><rect x="326" y="660" width="1" height="2" fill="#e02020"/><rect x="850" y="736" width="1" height="3" fill="#e02020"/><rect x="97" y="650" width="1" height="2" fill="#e02020"/><rect x="319" y="628" width="2" height="3" fill="#e02020"/><rect x="468" y="616" width="1" height="2" fill="#e02020"/><rect x="178" y="696" width="2" height="3" fill="#e02020"/><rect x="520" y="683" width="1" height="3" fill="#e02020"/><rect x="593" y="662" width="1" height="2" fill="#e02020"/><rect x="329" y="603" width="1" height="2" fill="#e02020"/><rect x="164" y="561" width="2" height="1" fill="#e02020"/><rect x="136" y="543" width="2" height="3" fill="#e02020"/><rect x="610" y="577" width="2" height="2" fill="#e02020"/><rect x="631" y="530" width="1" height="1" fill="#e02020"/><rect x="122" y="707" width="2" height="1" fill="#e02020"/><rect x="318" y="640" width="1" height="2" fill="#e02020"/><rect x="412" y="651" width="1" height="2" fill="#e02020"/><rect x="337" y="559" width="2" height="1" fill="#e02020"/><rect x="175" y="722" width="1" height="2" fill="#e02020"/><rect x="525" y="565" width="1" height="2" fill="#e02020"/><rect x="529" y="651" width="2" height="3" fill="#e02020"/><rect x="134" y="562" width="1" height="2" fill="#e02020"/><rect x="160" y="561" width="1" height="2" fill="#e02020"/><rect x="431" y="628" width="1" height="3" fill="#e02020"/><rect x="135" y="740" width="1" height="2" fill="#e02020"/><rect x="349" y="712" width="2" height="2" fill="#e02020"/><rect x="528" y="652" width="1" height="3" fill="#e02020"/><rect x="589" y="589" width="2" height="3" fill="#e02020"/><rect x="151" y="560" width="1" height="3" fill="#e02020"/><rect x="168" y="567" width="1" height="1" fill="#e02020"/><rect x="454" y="585" width="2" height="2" fill="#e02020"/><rect x="558" y="637" width="1" height="2" fill="#e02020"/><rect x="996" y="649" width="2" height="2" fill="#e02020"/><rect x="210" y="654" width="2" height="2" fill="#e02020"/><rect x="296" y="612" width="1" height="2" fill="#e02020"/><rect x="295" y="555" width="1" height="1" fill="#e02020"/><rect x="237" y="552" width="1" height="3" fill="#e02020"/><rect x="408" y="712" width="2" height="2" fill="#e02020"/><rect x="74" y="645" width="1" height="3" fill="#e02020"/><rect x="143" y="760" width="1" height="2" fill="#e02020"/><rect x="759" y="758" width="1" height="2" fill="#e02020"/><rect x="267" y="721" width="1" height="3" fill="#e02020"/><rect x="392" y="634" width="2" height="2" fill="#e02020"/><rect x="271" y="743" width="2" height="1" fill="#e02020"/><rect x="82" y="596" width="1" height="3" fill="#e02020"/><rect x="510" y="546" width="1" height="1" fill="#e02020"/><rect x="527" y="624" width="2" height="2" fill="#e02020"/><rect x="558" y="647" width="1" height="2" fill="#e02020"/><rect x="527" y="659" width="1" height="2" fill="#e02020"/><rect x="474" y="637" width="1" height="2" fill="#e02020"/><rect x="213" y="584" width="1" height="1" fill="#e02020"/><rect x="514" y="728" width="2" height="3" fill="#e02020"/><rect x="139" y="620" width="1" height="3" fill="#e02020"/><rect x="995" y="728" width="2" height="2" fill="#e02020"/><rect x="588" y="656" width="2" height="1" fill="#e02020"/><rect x="183" y="529" width="2" height="2" fill="#e02020"/><rect x="1124" y="592" width="1" height="2" fill="#e02020"/><rect x="588" y="751" width="2" height="1" fill="#e02020"/><rect x="61" y="643" width="1" height="2" fill="#e02020"/><rect x="148" y="740" width="1" height="1" fill="#e02020"/><rect x="637" y="571" width="1" height="3" fill="#e02020"/><rect x="403" y="532" width="2" height="2" fill="#e02020"/><rect x="890" y="575" width="1" height="2" fill="#e02020"/><rect x="179" y="752" width="2" height="1" fill="#e02020"/><rect x="120" y="738" width="2" height="1" fill="#e02020"/><rect x="567" y="594" width="2" height="3" fill="#e02020"/><rect x="177" y="612" width="2" height="2" fill="#e02020"/><rect x="162" y="536" width="2" height="3" fill="#e02020"/><rect x="111" y="703" width="2" height="1" fill="#e02020"/><rect x="74" y="542" width="2" height="3" fill="#e02020"/><rect x="78" y="668" width="2" height="3" fill="#e02020"/><rect x="555" y="541" width="1" height="3" fill="#e02020"/><rect x="272" y="636" width="2" height="1" fill="#e02020"/><rect x="212" y="765" width="1" height="2" fill="#e02020"/><rect x="189" y="760" width="2" height="2" fill="#e02020"/><rect x="852" y="532" width="2" height="2" fill="#e02020"/><rect x="437" y="544" width="2" height="1" fill="#e02020"/><rect x="594" y="644" width="1" height="3" fill="#e02020"/><rect x="585" y="531" width="2" height="2" fill="#e02020"/><rect x="421" y="612" width="2" height="3" fill="#e02020"/><rect x="409" y="543" width="1" height="2" fill="#e02020"/><rect x="390" y="605" width="2" height="2" fill="#e02020"/><rect x="532" y="693" width="1" height="3" fill="#e02020"/><rect x="460" y="625" width="1" height="2" fill="#e02020"/><rect x="180" y="707" width="2" height="2" fill="#e02020"/><rect x="590" y="619" width="1" height="2" fill="#e02020"/><rect x="93" y="633" width="1" height="1" fill="#e02020"/><rect x="339" y="580" width="1" height="3" fill="#e02020"/><rect x="1134" y="766" width="1" height="2" fill="#e02020"/><rect x="130" y="667" width="1" height="3" fill="#e02020"/><rect x="142" y="756" width="1" height="2" fill="#e02020"/><rect x="996" y="542" width="1" height="3" fill="#e02020"/><rect x="629" y="635" width="1" height="1" fill="#e02020"/><rect x="237" y="627" width="2" height="2" fill="#e02020"/><rect x="529" y="654" width="1" height="2" fill="#e02020"/><rect x="507" y="576" width="1" height="1" fill="#e02020"/><rect x="97" y="566" width="1" height="2" fill="#e02020"/><rect x="307" y="580" width="1" height="1" fill="#e02020"/><rect x="217" y="667" width="1" height="2" fill="#e02020"/><path d="M61.5,527.0l8,8M69.5,527.0l-8,8" stroke="#dcdcdc" stroke-width="1"/><path d="M117.3,575.6l8,8M125.3,575.6l-8,8" stroke="#dcdcdc" stroke-width="1"/><path d="M158.6,607.3l8,8M166.6,607.3l-8,8" stroke="#dcdcdc" stroke-width="1"/><path d="M182.7,562.4l8,8M190.7,562.4l-8,8" stroke="#dcdcdc" stroke-width="1"/><path d="M206.7,640.5l8,8M214.7,640.5l-8,8" stroke="#dcdcdc" stroke-width="1"/><path d="M141.8,663.8l8,8M149.8,663.8l-8,8" stroke="#dcdcdc" stroke-width="1"/><path d="M302.4,590.0l8,8M310.4,590.0l-8,8" stroke="#dcdcdc" stroke-width="1"/><path d="M248.3,750.4l8,8M256.3,750.4l-8,8" stroke="#dcdcdc" stroke-width="1"/><path d="M53.6,617.0l8,8M61.6,617.0l-8,8" stroke="#dcdcdc" stroke-width="1"/><path d="M66.0,629.0l8,8M74.0,629.0l-8,8" stroke="#dcdcdc" stroke-width="1"/><path d="M83.0,710.7l8,8M91.0,710.7l-8,8" stroke="#dcdcdc" stroke-width="1"/><path d="M96.9,743.2l8,8M104.9,743.2l-8,8" stroke="#dcdcdc" stroke-width="1"/><path d="M111.8,760.0l8,8M119.8,760.0l-8,8" stroke="#dcdcdc" stroke-width="1"/><path d="M351.3,562.6l8,8M359.3,562.6l-8,8" stroke="#dcdcdc" stroke-width="1"/><path d="M508.4,551.2l8,8M516.4,551.2l-8,8" stroke="#dcdcdc" stroke-width="1"/><path d="M527.4,571.5l8,8M535.4,571.5l-8,8" stroke="#dcdcdc" stroke-width="1"/><path d="M541.5,587.0l8,8M549.5,587.0l-8,8" stroke="#dcdcdc" stroke-width="1"/><path d="M549.0,593.7l8,8M557.0,593.7l-8,8" stroke="#dcdcdc" stroke-width="1"/><path d="M569.4,596.4l8,8M577.4,596.4l-8,8" stroke="#dcdcdc" stroke-width="1"/><path d="M584.3,584.3l8,8M592.3,584.3l-8,8" stroke="#dcdcdc" stroke-width="1"/><path d="M595.0,613.5l8,8M603.0,613.5l-8,8" stroke="#dcdcdc" stroke-width="1"/><path d="M641.1,602.7l8,8M649.1,602.7l-8,8" stroke="#dcdcdc" stroke-width="1"/><path d="M650.6,580.2l8,8M658.6,580.2l-8,8" stroke="#dcdcdc" stroke-width="1"/><path d="M606.5,644.7l8,8M614.5,644.7l-8,8" stroke="#dcdcdc" stroke-width="1"/><path d="M573.4,692.0l8,8M581.4,692.0l-8,8" stroke="#dcdcdc" stroke-width="1"/><path d="M426.4,702.3l8,8M434.4,702.3l-8,8" stroke="#dcdcdc" stroke-width="1"/><path d="M355.4,747.6l8,8M363.4,747.6l-8,8" stroke="#dcdcdc" stroke-width="1"/><path d="M207.2,640.6l8,8M215.2,640.6l-8,8" stroke="#dcdcdc" stroke-width="1"/><path d="M142.2,663.6l8,8M150.2,663.6l-8,8" stroke="#dcdcdc" stroke-width="1"/><path d="M587.0,758.4l8,8M595.0,758.4l-8,8" stroke="#dcdcdc" stroke-width="1"/><path d="M644.7,759.2l8,8M652.7,759.2l-8,8" stroke="#dcdcdc" stroke-width="1"/><path d="M500.3,521.0l8,8M508.3,521.0l-8,8" stroke="#dcdcdc" stroke-width="1"/><path d="M650.4,580.4l8,8M658.4,580.4l-8,8" stroke="#dcdcdc" stroke-width="1"/><path d="M640.8,602.0l8,8M648.8,602.0l-8,8" stroke="#dcdcdc" stroke-width="1"/><path d="M720.0,629.5l8,8M728.0,629.5l-8,8" stroke="#dcdcdc" stroke-width="1"/><path d="M644.4,759.3l8,8M652.4,759.3l-8,8" stroke="#dcdcdc" stroke-width="1"/><path d="M970.0,604.5l8,8M978.0,604.5l-8,8" stroke="#dcdcdc" stroke-width="1"/><path d="M970.0,619.4l8,8M978.0,619.4l-8,8" stroke="#dcdcdc" stroke-width="1"/><path d="M917.3,649.4l8,8M925.3,649.4l-8,8" stroke="#dcdcdc" stroke-width="1"/><path d="M920.4,703.5l8,8M928.4,703.5l-8,8" stroke="#dcdcdc" stroke-width="1"/><path d="M1002.4,635.0l8,8M1010.4,635.0l-8,8" stroke="#dcdcdc" stroke-width="1"/><path d="M1153.0,655.4l8,8M1161.0,655.4l-8,8" stroke="#dcdcdc" stroke-width="1"/><path d="M1168.7,644.6l8,8M1176.7,644.6l-8,8" stroke="#dcdcdc" stroke-width="1"/><path d="M1135.0,694.6l8,8M1143.0,694.6l-8,8" stroke="#dcdcdc" stroke-width="1"/><path d="M1132.7,734.3l8,8M1140.7,734.3l-8,8" stroke="#dcdcdc" stroke-width="1"/><path d="M1096.6,748.7l8,8M1104.6,748.7l-8,8" stroke="#dcdcdc" stroke-width="1"/><path d="M1113.5,758.3l8,8M1121.5,758.3l-8,8" stroke="#dcdcdc" stroke-width="1"/><path d="M1188.0,686.7l8,8M1196.0,686.7l-8,8" stroke="#dcdcdc" stroke-width="1"/><path d="M1226.4,589.3l8,8M1234.4,589.3l-8,8" stroke="#dcdcdc" stroke-width="1"/><path d="M156.0,610.0l8,8M164.0,610.0l-8,8" stroke="#dcdcdc" stroke-width="1"/><g font-family="Liberation Sans" font-size="11.5" fill="#c0642a"><text x="123" y="545">Bootes</text><text x="222.7" y="680">Canes venatici</text><text x="762.6" y="657">Camelopardalis</text><text x="1204" y="590">Taurus</text><text x="957" y="776">Auriga</text></g><circle cx="641" cy="461" r="4" fill="url(#sy)"/><path d="M631,457 C632,452 640,452 642,455 C646,457 645,464 641,466 C637,468 631,466 631,461Z" fill="none" stroke="#f0f0f0" stroke-width="1.2"/><path d="M633,459l7,4M634,463l6,-5" stroke="#a040c0" stroke-width=".8"/><text x="640" y="476" font-family="Liberation Sans" font-size="11" fill="#4060c0">Pô</text><path d="M627,428 L650,432 M650,434 L643,450 L652,458 M650,483 L642,492 L650,505 M627,507 L650,507" fill="none" stroke="#c8702a" stroke-width="1" stroke-dasharray="1 2"/><circle cx="643" cy="422" r="2.5" fill="url(#sw)"/><rect x="630" y="470" width="1" height="2" fill="#e02020"/><path d="M1249,453 a8,9 0 0 1 0,18" fill="none" stroke="#ddd" stroke-width="1.5"/></svg>
</div>
<div class="a" style="left:10px;top:768px;width:1254px;height:28px;background:#f0f0f0"></div>
<div class="a" style="left:10px;top:795px;width:1254px;height:1px;background:#9a9ea4"></div>
<div class="a" style="left:12px;top:772px;width:71px;height:21px;background:#f0f0f0;border-top:1px solid #a0a0a0;border-left:1px solid #a0a0a0;border-right:1px solid #fff;border-bottom:1px solid #fff"></div>
<div class="a" style="left:83px;top:772px;width:224px;height:21px;background:#f0f0f0;border-top:1px solid #a0a0a0;border-left:1px solid #a0a0a0;border-right:1px solid #fff;border-bottom:1px solid #fff"></div>
<div class="a" style="left:310px;top:771px;width:39px;height:22px;background:#fff;border:1px solid #7a7a7a"></div>
<div class="a" style="left:312px;top:773px;width:22px;height:18px;background:#f0f0f0"></div>
<div class="t" id="t19" style="left:314px;top:777.27px;font-size:11.5px;color:#000;">Eq</div>
<svg class="a" style="left:336px;top:779px;" width="10" height="6" viewBox="0 0 10 6"><path d="M1 1l4 4 4-4" fill="none" stroke="#444" stroke-width="1"/></svg>
<div class="a" style="left:351px;top:772px;width:87px;height:21px;background:#f0f0f0;border-top:1px solid #a0a0a0;border-left:1px solid #a0a0a0;border-right:1px solid #fff;border-bottom:1px solid #fff"></div>
<div class="a" style="left:442px;top:772px;width:42px;height:21px;background:#f0f0f0;border-top:1px solid #a0a0a0;border-left:1px solid #a0a0a0;border-right:1px solid #fff;border-bottom:1px solid #fff"></div>
<div class="a" style="left:488px;top:772px;width:182px;height:21px;background:#f0f0f0;border-top:1px solid #a0a0a0;border-left:1px solid #a0a0a0;border-right:1px solid #fff;border-bottom:1px solid #fff"></div>
<div class="a" style="left:673px;top:772px;width:325px;height:21px;background:#f0f0f0;border-top:1px solid #a0a0a0;border-left:1px solid #a0a0a0;border-right:1px solid #fff;border-bottom:1px solid #fff"></div>
<div class="a" style="left:1001px;top:772px;width:262px;height:21px;background:#f0f0f0;border-top:1px solid #a0a0a0;border-left:1px solid #a0a0a0;border-right:1px solid #fff;border-bottom:1px solid #fff"></div>
<div class="t" id="t20" style="left:17.5px;top:775.27px;font-size:11.5px;color:#000;letter-spacing:-0.502px;">Zoom=2</div>
<div class="t" id="t21" style="left:356px;top:775.27px;font-size:11.5px;color:#000;letter-spacing:-0.474px;">Objets: 2847</div>
<div class="t" id="t22" style="left:495px;top:775.27px;font-size:11.5px;color:#000;letter-spacing:-0.550px;">Champ=180 ° x 120 °</div>
<div class="t" id="t23" style="left:679.5px;top:775.27px;font-size:11.5px;color:#cc1111;letter-spacing:-0.432px;">Mode carte Azimutal, Azimutal fixe, Date/heure PC temps réel</div>
<div class="t" id="t24" style="left:1007.4px;top:775.27px;font-size:11.5px;color:#cc1111;letter-spacing:-0.539px;">EQ. J2000-1-1 (0.52s)</div>
<div class="a" style="left:28px;top:108px;width:600px;height:417px;background:linear-gradient(180deg,#c1d0e2 0px,#ccdbeb 14px,#d6e3f1 30px,#dae6f3 100%);border:1px solid #3f4b58;border-bottom-color:#5b6775;border-radius:7px 7px 0 0;box-shadow:inset 1px 1px 0 rgba(255,255,255,.55),inset -1px -1px 0 rgba(255,255,255,.4)"></div>
<div class="a" style="left:518px;top:118px;width:32px;height:18px;background:linear-gradient(#d6e1ee,#cbd9ea 50%,#c5d4e6 51%,#d0deee);border:1px solid #8797ab;border-radius:3px"></div>
<svg class="a" style="left:528px;top:124px;" width="12" height="7" viewBox="0 0 12 7"><rect x="0.5" y="1.5" width="10" height="4" rx="1.5" fill="#f4f4f4" stroke="#40454c" stroke-width="1"/></svg>
<div class="a" style="left:552px;top:118px;width:32px;height:18px;background:linear-gradient(#d6e1ee,#cbd9ea 50%,#c5d4e6 51%,#d0deee);border:1px solid #8797ab;border-radius:3px"></div>
<svg class="a" style="left:563px;top:121px;" width="11" height="10" viewBox="0 0 11 10"><rect x="0.5" y="0.5" width="10" height="8" fill="none" stroke="#40454c" stroke-width="1"/><rect x="1.5" y="1.5" width="8" height="6" fill="none" stroke="#eee" stroke-width="1.6"/><rect x="3" y="3" width="5" height="3" fill="none" stroke="#40454c" stroke-width="1"/></svg>
<div class="a" style="left:586px;top:118px;width:32px;height:18px;background:linear-gradient(#d6e1ee,#cbd9ea 50%,#c5d4e6 51%,#d0deee);border:1px solid #8797ab;border-radius:3px"></div>
<svg class="a" style="left:595px;top:121px;" width="13" height="10" viewBox="0 0 13 10"><path d="M3 2L10 8M10 2L3 8" stroke="#3a3f46" stroke-width="4.4" stroke-linecap="round"/><path d="M3 2L10 8M10 2L3 8" stroke="#f6f6f6" stroke-width="2.6" stroke-linecap="round"/></svg>
<svg class="a" style="left:37px;top:119px;" width="17" height="17" viewBox="0 0 17 17"><g transform="translate(8.5,8.5)"><path d="M5.60,0.00 L7.45,1.48 L7.02,2.91 L4.66,3.11 L3.96,3.96 L4.22,6.32 L2.91,7.02 L1.09,5.49 L0.00,5.60 L-1.48,7.45 L-2.91,7.02 L-3.11,4.66 L-3.96,3.96 L-6.32,4.22 L-7.02,2.91 L-5.49,1.09 L-5.60,0.00 L-7.45,-1.48 L-7.02,-2.91 L-4.66,-3.11 L-3.96,-3.96 L-4.22,-6.32 L-2.91,-7.02 L-1.09,-5.49 L-0.00,-5.60 L1.48,-7.45 L2.91,-7.02 L3.11,-4.66 L3.96,-3.96 L6.32,-4.22 L7.02,-2.91 L5.49,-1.09Z" fill="#303030" stroke="#101010" stroke-width="0.6"/><circle r="3.6" fill="#8a8a8a"/><circle r="1.8" fill="#505050"/></g></svg>
<div class="t" id="t25" style="left:58px;top:121.34px;font-size:12px;color:#8793a2;letter-spacing:-0.291px;">Puissance, toute les 5s</div>
<div class="a" style="left:36px;top:139px;width:584px;height:378px;background:#f0f0f0"></div>
<div class="a" style="left:36px;top:139px;width:584px;height:333px;background:#fff;border-top:1px solid #a0a0a0;border-left:1px solid #a0a0a0"></div>
<div class="a" style="left:39px;top:142px;width:577px;height:328px;background:#fff;border:1px solid #000"></div>
<svg class="a" style="left:0px;top:0px;pointer-events:none" width="1920" height="1040" viewBox="0 0 1920 1040"><g shape-rendering="crispEdges"><line x1="158.5" y1="191" x2="158.5" y2="421" stroke="#a8a8a8" stroke-width="1"/><line x1="230.5" y1="191" x2="230.5" y2="421" stroke="#a8a8a8" stroke-width="1"/><line x1="301.5" y1="191" x2="301.5" y2="421" stroke="#a8a8a8" stroke-width="1"/><line x1="373.5" y1="191" x2="373.5" y2="421" stroke="#a8a8a8" stroke-width="1"/><line x1="445.5" y1="191" x2="445.5" y2="421" stroke="#a8a8a8" stroke-width="1"/><line x1="517.5" y1="191" x2="517.5" y2="421" stroke="#a8a8a8" stroke-width="1"/><line x1="88" y1="210.5" x2="567" y2="210.5" stroke="#a8a8a8" stroke-width="1"/><line x1="88" y1="348.5" x2="567" y2="348.5" stroke="#a8a8a8" stroke-width="1"/><line x1="84" y1="197.5" x2="88" y2="197.5" stroke="#000" stroke-width="1"/><line x1="79" y1="210.5" x2="88" y2="210.5" stroke="#000" stroke-width="1"/><line x1="84" y1="224.5" x2="88" y2="224.5" stroke="#000" stroke-width="1"/><line x1="84" y1="238.5" x2="88" y2="238.5" stroke="#000" stroke-width="1"/><line x1="84" y1="252.5" x2="88" y2="252.5" stroke="#000" stroke-width="1"/><line x1="84" y1="266.5" x2="88" y2="266.5" stroke="#000" stroke-width="1"/><line x1="84" y1="279.5" x2="88" y2="279.5" stroke="#000" stroke-width="1"/><line x1="84" y1="293.5" x2="88" y2="293.5" stroke="#000" stroke-width="1"/><line x1="84" y1="307.5" x2="88" y2="307.5" stroke="#000" stroke-width="1"/><line x1="84" y1="320.5" x2="88" y2="320.5" stroke="#000" stroke-width="1"/><line x1="84" y1="334.5" x2="88" y2="334.5" stroke="#000" stroke-width="1"/><line x1="79" y1="348.5" x2="88" y2="348.5" stroke="#000" stroke-width="1"/><line x1="84" y1="362.5" x2="88" y2="362.5" stroke="#000" stroke-width="1"/><line x1="84" y1="376.5" x2="88" y2="376.5" stroke="#000" stroke-width="1"/><line x1="84" y1="389.5" x2="88" y2="389.5" stroke="#000" stroke-width="1"/><line x1="84" y1="403.5" x2="88" y2="403.5" stroke="#000" stroke-width="1"/><line x1="84" y1="417.5" x2="88" y2="417.5" stroke="#000" stroke-width="1"/><line x1="93.5" y1="421" x2="93.5" y2="426" stroke="#000" stroke-width="1"/><line x1="101.5" y1="421" x2="101.5" y2="426" stroke="#000" stroke-width="1"/><line x1="108.5" y1="421" x2="108.5" y2="426" stroke="#000" stroke-width="1"/><line x1="115.5" y1="421" x2="115.5" y2="426" stroke="#000" stroke-width="1"/><line x1="122.5" y1="421" x2="122.5" y2="426" stroke="#000" stroke-width="1"/><line x1="129.5" y1="421" x2="129.5" y2="426" stroke="#000" stroke-width="1"/><line x1="136.5" y1="421" x2="136.5" y2="426" stroke="#000" stroke-width="1"/><line x1="144.5" y1="421" x2="144.5" y2="426" stroke="#000" stroke-width="1"/><line x1="151.5" y1="421" x2="151.5" y2="426" stroke="#000" stroke-width="1"/><line x1="158.5" y1="421" x2="158.5" y2="431" stroke="#000" stroke-width="1"/><line x1="165.5" y1="421" x2="165.5" y2="426" stroke="#000" stroke-width="1"/><line x1="172.5" y1="421" x2="172.5" y2="426" stroke="#000" stroke-width="1"/><line x1="179.5" y1="421" x2="179.5" y2="426" stroke="#000" stroke-width="1"/><line x1="187.5" y1="421" x2="187.5" y2="426" stroke="#000" stroke-width="1"/><line x1="194.5" y1="421" x2="194.5" y2="426" stroke="#000" stroke-width="1"/><line x1="201.5" y1="421" x2="201.5" y2="426" stroke="#000" stroke-width="1"/><line x1="208.5" y1="421" x2="208.5" y2="426" stroke="#000" stroke-width="1"/><line x1="215.5" y1="421" x2="215.5" y2="426" stroke="#000" stroke-width="1"/><line x1="223.5" y1="421" x2="223.5" y2="426" stroke="#000" stroke-width="1"/><line x1="230.5" y1="421" x2="230.5" y2="431" stroke="#000" stroke-width="1"/><line x1="237.5" y1="421" x2="237.5" y2="426" stroke="#000" stroke-width="1"/><line x1="244.5" y1="421" x2="244.5" y2="426" stroke="#000" stroke-width="1"/><line x1="251.5" y1="421" x2="251.5" y2="426" stroke="#000" stroke-width="1"/><line x1="258.5" y1="421" x2="258.5" y2="426" stroke="#000" stroke-width="1"/><line x1="266.5" y1="421" x2="266.5" y2="426" stroke="#000" stroke-width="1"/><line x1="273.5" y1="421" x2="273.5" y2="426" stroke="#000" stroke-width="1"/><line x1="280.5" y1="421" x2="280.5" y2="426" stroke="#000" stroke-width="1"/><line x1="287.5" y1="421" x2="287.5" y2="426" stroke="#000" stroke-width="1"/><line x1="294.5" y1="421" x2="294.5" y2="426" stroke="#000" stroke-width="1"/><line x1="301.5" y1="421" x2="301.5" y2="431" stroke="#000" stroke-width="1"/><line x1="309.5" y1="421" x2="309.5" y2="426" stroke="#000" stroke-width="1"/><line x1="316.5" y1="421" x2="316.5" y2="426" stroke="#000" stroke-width="1"/><line x1="323.5" y1="421" x2="323.5" y2="426" stroke="#000" stroke-width="1"/><line x1="330.5" y1="421" x2="330.5" y2="426" stroke="#000" stroke-width="1"/><line x1="337.5" y1="421" x2="337.5" y2="426" stroke="#000" stroke-width="1"/><line x1="344.5" y1="421" x2="344.5" y2="426" stroke="#000" stroke-width="1"/><line x1="352.5" y1="421" x2="352.5" y2="426" stroke="#000" stroke-width="1"/><line x1="359.5" y1="421" x2="359.5" y2="426" stroke="#000" stroke-width="1"/><line x1="366.5" y1="421" x2="366.5" y2="426" stroke="#000" stroke-width="1"/><line x1="373.5" y1="421" x2="373.5" y2="431" stroke="#000" stroke-width="1"/><line x1="380.5" y1="421" x2="380.5" y2="426" stroke="#000" stroke-width="1"/><line x1="388.5" y1="421" x2="388.5" y2="426" stroke="#000" stroke-width="1"/><line x1="395.5" y1="421" x2="395.5" y2="426" stroke="#000" stroke-width="1"/><line x1="402.5" y1="421" x2="402.5" y2="426" stroke="#000" stroke-width="1"/><line x1="409.5" y1="421" x2="409.5" y2="426" stroke="#000" stroke-width="1"/><line x1="416.5" y1="421" x2="416.5" y2="426" stroke="#000" stroke-width="1"/><line x1="423.5" y1="421" x2="423.5" y2="426" stroke="#000" stroke-width="1"/><line x1="431.5" y1="421" x2="431.5" y2="426" stroke="#000" stroke-width="1"/><line x1="438.5" y1="421" x2="438.5" y2="426" stroke="#000" stroke-width="1"/><line x1="445.5" y1="421" x2="445.5" y2="431" stroke="#000" stroke-width="1"/><line x1="452.5" y1="421" x2="452.5" y2="426" stroke="#000" stroke-width="1"/><line x1="459.5" y1="421" x2="459.5" y2="426" stroke="#000" stroke-width="1"/><line x1="466.5" y1="421" x2="466.5" y2="426" stroke="#000" stroke-width="1"/><line x1="474.5" y1="421" x2="474.5" y2="426" stroke="#000" stroke-width="1"/><line x1="481.5" y1="421" x2="481.5" y2="426" stroke="#000" stroke-width="1"/><line x1="488.5" y1="421" x2="488.5" y2="426" stroke="#000" stroke-width="1"/><line x1="495.5" y1="421" x2="495.5" y2="426" stroke="#000" stroke-width="1"/><line x1="502.5" y1="421" x2="502.5" y2="426" stroke="#000" stroke-width="1"/><line x1="509.5" y1="421" x2="509.5" y2="426" stroke="#000" stroke-width="1"/><line x1="517.5" y1="421" x2="517.5" y2="431" stroke="#000" stroke-width="1"/><line x1="524.5" y1="421" x2="524.5" y2="426" stroke="#000" stroke-width="1"/><line x1="531.5" y1="421" x2="531.5" y2="426" stroke="#000" stroke-width="1"/><line x1="538.5" y1="421" x2="538.5" y2="426" stroke="#000" stroke-width="1"/><line x1="545.5" y1="421" x2="545.5" y2="426" stroke="#000" stroke-width="1"/><line x1="553.5" y1="421" x2="553.5" y2="426" stroke="#000" stroke-width="1"/><line x1="560.5" y1="421" x2="560.5" y2="426" stroke="#000" stroke-width="1"/><line x1="567.5" y1="421" x2="567.5" y2="426" stroke="#000" stroke-width="1"/><rect x="88.5" y="191.5" width="479" height="230" fill="none" stroke="#000" stroke-width="1.1"/></g><line x1="88" y1="306.5" x2="576" y2="306.5" stroke="#000" stroke-width="1.2"/><line x1="567" y1="306.5" x2="576" y2="306.5" stroke="#d03030" stroke-width="1.2"/><circle cx="88.00" cy="306.5" r="2.9" fill="none" stroke="#000" stroke-width="1.1"/><circle cx="93.98" cy="306.5" r="2.9" fill="none" stroke="#000" stroke-width="1.1"/><circle cx="99.97" cy="306.5" r="2.9" fill="none" stroke="#000" stroke-width="1.1"/><circle cx="105.95" cy="306.5" r="2.9" fill="none" stroke="#000" stroke-width="1.1"/><circle cx="111.94" cy="306.5" r="2.9" fill="none" stroke="#000" stroke-width="1.1"/><circle cx="117.92" cy="306.5" r="2.9" fill="none" stroke="#000" stroke-width="1.1"/><circle cx="123.91" cy="306.5" r="2.9" fill="none" stroke="#000" stroke-width="1.1"/><circle cx="129.90" cy="306.5" r="2.9" fill="none" stroke="#000" stroke-width="1.1"/><circle cx="135.88" cy="306.5" r="2.9" fill="none" stroke="#000" stroke-width="1.1"/><circle cx="141.87" cy="306.5" r="2.9" fill="none" stroke="#000" stroke-width="1.1"/><circle cx="147.85" cy="306.5" r="2.9" fill="none" stroke="#000" stroke-width="1.1"/><circle cx="153.84" cy="306.5" r="2.9" fill="none" stroke="#000" stroke-width="1.1"/><circle cx="159.82" cy="306.5" r="2.9" fill="none" stroke="#000" stroke-width="1.1"/><circle cx="165.81" cy="306.5" r="2.9" fill="none" stroke="#000" stroke-width="1.1"/><circle cx="171.79" cy="306.5" r="2.9" fill="none" stroke="#000" stroke-width="1.1"/><circle cx="177.78" cy="306.5" r="2.9" fill="none" stroke="#000" stroke-width="1.1"/><circle cx="183.76" cy="306.5" r="2.9" fill="none" stroke="#000" stroke-width="1.1"/><circle cx="189.75" cy="306.5" r="2.9" fill="none" stroke="#000" stroke-width="1.1"/><circle cx="195.73" cy="306.5" r="2.9" fill="none" stroke="#000" stroke-width="1.1"/><circle cx="201.72" cy="306.5" r="2.9" fill="none" stroke="#000" stroke-width="1.1"/><circle cx="207.70" cy="306.5" r="2.9" fill="none" stroke="#000" stroke-width="1.1"/><circle cx="213.69" cy="306.5" r="2.9" fill="none" stroke="#000" stroke-width="1.1"/><circle cx="219.67" cy="306.5" r="2.9" fill="none" stroke="#000" stroke-width="1.1"/><circle cx="225.66" cy="306.5" r="2.9" fill="none" stroke="#000" stroke-width="1.1"/><circle cx="231.64" cy="306.5" r="2.9" fill="none" stroke="#000" stroke-width="1.1"/><circle cx="237.62" cy="306.5" r="2.9" fill="none" stroke="#000" stroke-width="1.1"/><circle cx="243.61" cy="306.5" r="2.9" fill="none" stroke="#000" stroke-width="1.1"/><circle cx="249.59" cy="306.5" r="2.9" fill="none" stroke="#000" stroke-width="1.1"/><circle cx="255.58" cy="306.5" r="2.9" fill="none" stroke="#000" stroke-width="1.1"/><circle cx="261.56" cy="306.5" r="2.9" fill="none" stroke="#000" stroke-width="1.1"/><circle cx="267.55" cy="306.5" r="2.9" fill="none" stroke="#000" stroke-width="1.1"/><circle cx="273.53" cy="306.5" r="2.9" fill="none" stroke="#000" stroke-width="1.1"/><circle cx="279.52" cy="306.5" r="2.9" fill="none" stroke="#000" stroke-width="1.1"/><circle cx="285.50" cy="306.5" r="2.9" fill="none" stroke="#000" stroke-width="1.1"/><circle cx="291.49" cy="306.5" r="2.9" fill="none" stroke="#000" stroke-width="1.1"/><circle cx="297.48" cy="306.5" r="2.9" fill="none" stroke="#000" stroke-width="1.1"/><circle cx="303.46" cy="306.5" r="2.9" fill="none" stroke="#000" stroke-width="1.1"/><circle cx="309.45" cy="306.5" r="2.9" fill="none" stroke="#000" stroke-width="1.1"/><circle cx="315.43" cy="306.5" r="2.9" fill="none" stroke="#000" stroke-width="1.1"/><circle cx="321.42" cy="306.5" r="2.9" fill="none" stroke="#000" stroke-width="1.1"/><circle cx="327.40" cy="306.5" r="2.9" fill="none" stroke="#000" stroke-width="1.1"/><circle cx="333.38" cy="306.5" r="2.9" fill="none" stroke="#000" stroke-width="1.1"/><circle cx="339.37" cy="306.5" r="2.9" fill="none" stroke="#000" stroke-width="1.1"/><circle cx="345.36" cy="306.5" r="2.9" fill="none" stroke="#000" stroke-width="1.1"/><circle cx="351.34" cy="306.5" r="2.9" fill="none" stroke="#000" stroke-width="1.1"/><circle cx="357.32" cy="306.5" r="2.9" fill="none" stroke="#000" stroke-width="1.1"/><circle cx="363.31" cy="306.5" r="2.9" fill="none" stroke="#000" stroke-width="1.1"/><circle cx="369.30" cy="306.5" r="2.9" fill="none" stroke="#000" stroke-width="1.1"/><circle cx="375.28" cy="306.5" r="2.9" fill="none" stroke="#000" stroke-width="1.1"/><circle cx="381.27" cy="306.5" r="2.9" fill="none" stroke="#000" stroke-width="1.1"/><circle cx="387.25" cy="306.5" r="2.9" fill="none" stroke="#000" stroke-width="1.1"/><circle cx="393.24" cy="306.5" r="2.9" fill="none" stroke="#000" stroke-width="1.1"/><circle cx="399.22" cy="306.5" r="2.9" fill="none" stroke="#000" stroke-width="1.1"/><circle cx="405.21" cy="306.5" r="2.9" fill="none" stroke="#000" stroke-width="1.1"/><circle cx="411.19" cy="306.5" r="2.9" fill="none" stroke="#000" stroke-width="1.1"/><circle cx="417.18" cy="306.5" r="2.9" fill="none" stroke="#000" stroke-width="1.1"/><circle cx="423.16" cy="306.5" r="2.9" fill="none" stroke="#000" stroke-width="1.1"/><circle cx="429.15" cy="306.5" r="2.9" fill="none" stroke="#000" stroke-width="1.1"/><circle cx="435.13" cy="306.5" r="2.9" fill="none" stroke="#000" stroke-width="1.1"/><circle cx="441.12" cy="306.5" r="2.9" fill="none" stroke="#000" stroke-width="1.1"/><circle cx="447.10" cy="306.5" r="2.9" fill="none" stroke="#000" stroke-width="1.1"/><circle cx="453.09" cy="306.5" r="2.9" fill="none" stroke="#000" stroke-width="1.1"/><circle cx="459.07" cy="306.5" r="2.9" fill="none" stroke="#000" stroke-width="1.1"/><circle cx="465.06" cy="306.5" r="2.9" fill="none" stroke="#000" stroke-width="1.1"/><circle cx="471.04" cy="306.5" r="2.9" fill="none" stroke="#000" stroke-width="1.1"/><circle cx="477.03" cy="306.5" r="2.9" fill="none" stroke="#000" stroke-width="1.1"/><circle cx="483.01" cy="306.5" r="2.9" fill="none" stroke="#000" stroke-width="1.1"/><circle cx="489.00" cy="306.5" r="2.9" fill="none" stroke="#000" stroke-width="1.1"/><circle cx="494.98" cy="306.5" r="2.9" fill="none" stroke="#000" stroke-width="1.1"/><circle cx="500.97" cy="306.5" r="2.9" fill="none" stroke="#000" stroke-width="1.1"/><circle cx="506.95" cy="306.5" r="2.9" fill="none" stroke="#000" stroke-width="1.1"/><circle cx="512.93" cy="306.5" r="2.9" fill="none" stroke="#000" stroke-width="1.1"/><circle cx="518.92" cy="306.5" r="2.9" fill="none" stroke="#000" stroke-width="1.1"/><circle cx="524.90" cy="306.5" r="2.9" fill="none" stroke="#000" stroke-width="1.1"/><circle cx="530.89" cy="306.5" r="2.9" fill="none" stroke="#000" stroke-width="1.1"/><circle cx="536.88" cy="306.5" r="2.9" fill="none" stroke="#000" stroke-width="1.1"/><circle cx="542.86" cy="306.5" r="2.9" fill="none" stroke="#000" stroke-width="1.1"/><circle cx="548.85" cy="306.5" r="2.9" fill="none" stroke="#000" stroke-width="1.1"/><circle cx="554.83" cy="306.5" r="2.9" fill="none" stroke="#000" stroke-width="1.1"/><circle cx="560.82" cy="306.5" r="2.9" fill="none" stroke="#000" stroke-width="1.1"/><circle cx="566.80" cy="306.5" r="2.9" fill="none" stroke="#000" stroke-width="1.1"/></svg>
<div class="t" id="t26" style="left:88px;top:168.19px;font-size:11px;color:#000;letter-spacing:-0.074px;">Puissance, toute les 5s</div>
<div class="t" id="t27" style="left:61.3px;top:205.19px;font-size:11px;color:#000;">90</div>
<div class="t" id="t28" style="left:61.3px;top:342.69px;font-size:11px;color:#000;">80</div>
<div class="t" id="t29" style="left:155.4px;top:435.69px;font-size:11px;color:#000;">1</div>
<div class="t" id="t30" style="left:227.14px;top:435.69px;font-size:11px;color:#000;">2</div>
<div class="t" id="t31" style="left:298.88px;top:435.69px;font-size:11px;color:#000;">3</div>
<div class="t" id="t32" style="left:370.62px;top:435.69px;font-size:11px;color:#000;">4</div>
<div class="t" id="t33" style="left:442.36px;top:435.69px;font-size:11px;color:#000;">5</div>
<div class="t" id="t34" style="left:514.1px;top:435.69px;font-size:11px;color:#000;">6</div>
<div class="t" id="t35" style="left:297.5px;top:452.69px;font-size:11px;color:#000;letter-spacing:-0.101px;">Temps (Min)</div>
<div class="t" id="t36" style="left:583px;top:257.69px;font-size:11px;color:#000;">V</div>
<div class="t" id="t37" style="left:583px;top:267.89px;font-size:11px;color:#000;">a</div>
<div class="t" id="t38" style="left:583px;top:278.09px;font-size:11px;color:#000;">l</div>
<div class="t" id="t39" style="left:583px;top:288.29px;font-size:11px;color:#000;">e</div>
<div class="t" id="t40" style="left:583px;top:298.49px;font-size:11px;color:#000;">u</div>
<div class="t" id="t41" style="left:583px;top:308.69px;font-size:11px;color:#000;">r</div>
<div class="t" id="t42" style="left:583px;top:337.69px;font-size:11px;color:#000;">%</div>
<div class="a" style="left:37px;top:476px;width:74px;height:21px;background:#e1e1e1;border:1px solid #adadad"></div>
<div class="t" id="t43" style="left:50px;top:481.27px;font-size:11.5px;color:#000;letter-spacing:-0.227px;">Réglages</div>
<div class="a" style="left:36px;top:498px;width:583px;height:1px;background:#d8d8d8"></div>
<div class="a" style="left:185px;top:501px;width:1px;height:16px;background:#d8d8d8"></div>
<div class="t" id="t44" style="left:38.5px;top:502.77px;font-size:11.5px;color:#000;letter-spacing:-0.522px;">579x330</div>
<svg class="a" style="left:609px;top:506px;" width="10" height="10" viewBox="0 0 10 10"><g fill="#b8b8b8"><rect x="7" y="1" width="2" height="2"/><rect x="4" y="4" width="2" height="2"/><rect x="7" y="4" width="2" height="2"/><rect x="1" y="7" width="2" height="2"/><rect x="4" y="7" width="2" height="2"/><rect x="7" y="7" width="2" height="2"/></g></svg>
<div class="a" style="left:650px;top:112px;width:598px;height:416px;background:linear-gradient(180deg,#9fb9d8 0px,#b0c8e4 14px,#bcd2ea 30px,#bfd4eb 100%);border:1px solid #3f4b58;border-right:2px solid #90dcf8;border-bottom:2px solid #90dcf8;border-radius:7px 7px 0 0;box-shadow:inset 1px 1px 0 rgba(255,255,255,.55),inset -1px -1px 0 rgba(255,255,255,.4)"></div>
<div class="a" style="left:1139px;top:122px;width:32px;height:18px;background:linear-gradient(#c9d9ec,#b8cde6 45%,#9fb8d6 46%,#b6cde6);border:1px solid #58697e;border-radius:3px"></div>
<svg class="a" style="left:1149px;top:128px;" width="12" height="7" viewBox="0 0 12 7"><rect x="0.5" y="1.5" width="10" height="4" rx="1.5" fill="#f4f4f4" stroke="#40454c" stroke-width="1"/></svg>
<div class="a" style="left:1173px;top:122px;width:32px;height:18px;background:linear-gradient(#c9d9ec,#b8cde6 45%,#9fb8d6 46%,#b6cde6);border:1px solid #58697e;border-radius:3px"></div>
<svg class="a" style="left:1184px;top:125px;" width="11" height="10" viewBox="0 0 11 10"><rect x="0.5" y="0.5" width="10" height="8" fill="none" stroke="#40454c" stroke-width="1"/><rect x="1.5" y="1.5" width="8" height="6" fill="none" stroke="#eee" stroke-width="1.6"/><rect x="3" y="3" width="5" height="3" fill="none" stroke="#40454c" stroke-width="1"/></svg>
<div class="a" style="left:1207px;top:122px;width:32px;height:18px;background:linear-gradient(#e8a18e,#d9806a 45%,#c0442a 46%,#ce6a4e);border:1px solid #3a1e1e;border-radius:3px"></div>
<svg class="a" style="left:1216px;top:125px;" width="13" height="10" viewBox="0 0 13 10"><path d="M3 2L10 8M10 2L3 8" stroke="#3a3f46" stroke-width="4.4" stroke-linecap="round"/><path d="M3 2L10 8M10 2L3 8" stroke="#f6f6f6" stroke-width="2.6" stroke-linecap="round"/></svg>
<svg class="a" style="left:658px;top:123px;" width="17" height="17" viewBox="0 0 17 17"><g transform="translate(8.5,8.5)"><path d="M5.60,0.00 L7.45,1.48 L7.02,2.91 L4.66,3.11 L3.96,3.96 L4.22,6.32 L2.91,7.02 L1.09,5.49 L0.00,5.60 L-1.48,7.45 L-2.91,7.02 L-3.11,4.66 L-3.96,3.96 L-6.32,4.22 L-7.02,2.91 L-5.49,1.09 L-5.60,0.00 L-7.45,-1.48 L-7.02,-2.91 L-4.66,-3.11 L-3.96,-3.96 L-4.22,-6.32 L-2.91,-7.02 L-1.09,-5.49 L-0.00,-5.60 L1.48,-7.45 L2.91,-7.02 L3.11,-4.66 L3.96,-3.96 L6.32,-4.22 L7.02,-2.91 L5.49,-1.09Z" fill="#303030" stroke="#101010" stroke-width="0.6"/><circle r="3.6" fill="#8a8a8a"/><circle r="1.8" fill="#505050"/></g></svg>
<div class="t" id="t45" style="left:679px;top:125.34px;font-size:12px;color:#000;letter-spacing:-0.232px;">Temperature CCD, toutes les 5s</div>
<div class="a" style="left:657px;top:143px;width:584px;height:378px;background:#f0f0f0"></div>
<div class="a" style="left:657px;top:143px;width:584px;height:333px;background:#fff;border-top:1px solid #a0a0a0;border-left:1px solid #a0a0a0"></div>
<div class="a" style="left:660px;top:146px;width:577px;height:328px;background:#fff;border:1px solid #000"></div>
<svg class="a" style="left:0px;top:0px;pointer-events:none" width="1920" height="1040" viewBox="0 0 1920 1040"><g shape-rendering="crispEdges"><line x1="780.5" y1="195" x2="780.5" y2="425" stroke="#a8a8a8" stroke-width="1"/><line x1="852.5" y1="195" x2="852.5" y2="425" stroke="#a8a8a8" stroke-width="1"/><line x1="923.5" y1="195" x2="923.5" y2="425" stroke="#a8a8a8" stroke-width="1"/><line x1="995.5" y1="195" x2="995.5" y2="425" stroke="#a8a8a8" stroke-width="1"/><line x1="1067.5" y1="195" x2="1067.5" y2="425" stroke="#a8a8a8" stroke-width="1"/><line x1="1139.5" y1="195" x2="1139.5" y2="425" stroke="#a8a8a8" stroke-width="1"/><line x1="709" y1="286.5" x2="1188" y2="286.5" stroke="#a8a8a8" stroke-width="1"/><line x1="709" y1="403.5" x2="1188" y2="403.5" stroke="#a8a8a8" stroke-width="1"/><line x1="705" y1="274.5" x2="709" y2="274.5" stroke="#000" stroke-width="1"/><line x1="705" y1="262.5" x2="709" y2="262.5" stroke="#000" stroke-width="1"/><line x1="705" y1="251.5" x2="709" y2="251.5" stroke="#000" stroke-width="1"/><line x1="705" y1="239.5" x2="709" y2="239.5" stroke="#000" stroke-width="1"/><line x1="705" y1="227.5" x2="709" y2="227.5" stroke="#000" stroke-width="1"/><line x1="705" y1="216.5" x2="709" y2="216.5" stroke="#000" stroke-width="1"/><line x1="705" y1="204.5" x2="709" y2="204.5" stroke="#000" stroke-width="1"/><line x1="700" y1="286.5" x2="709" y2="286.5" stroke="#000" stroke-width="1"/><line x1="705" y1="298.5" x2="709" y2="298.5" stroke="#000" stroke-width="1"/><line x1="705" y1="310.5" x2="709" y2="310.5" stroke="#000" stroke-width="1"/><line x1="705" y1="321.5" x2="709" y2="321.5" stroke="#000" stroke-width="1"/><line x1="705" y1="333.5" x2="709" y2="333.5" stroke="#000" stroke-width="1"/><line x1="705" y1="345.5" x2="709" y2="345.5" stroke="#000" stroke-width="1"/><line x1="705" y1="356.5" x2="709" y2="356.5" stroke="#000" stroke-width="1"/><line x1="705" y1="368.5" x2="709" y2="368.5" stroke="#000" stroke-width="1"/><line x1="705" y1="380.5" x2="709" y2="380.5" stroke="#000" stroke-width="1"/><line x1="705" y1="392.5" x2="709" y2="392.5" stroke="#000" stroke-width="1"/><line x1="700" y1="404.5" x2="709" y2="404.5" stroke="#000" stroke-width="1"/><line x1="705" y1="415.5" x2="709" y2="415.5" stroke="#000" stroke-width="1"/><line x1="715.5" y1="425" x2="715.5" y2="430" stroke="#000" stroke-width="1"/><line x1="723.5" y1="425" x2="723.5" y2="430" stroke="#000" stroke-width="1"/><line x1="730.5" y1="425" x2="730.5" y2="430" stroke="#000" stroke-width="1"/><line x1="737.5" y1="425" x2="737.5" y2="430" stroke="#000" stroke-width="1"/><line x1="744.5" y1="425" x2="744.5" y2="430" stroke="#000" stroke-width="1"/><line x1="751.5" y1="425" x2="751.5" y2="430" stroke="#000" stroke-width="1"/><line x1="758.5" y1="425" x2="758.5" y2="430" stroke="#000" stroke-width="1"/><line x1="766.5" y1="425" x2="766.5" y2="430" stroke="#000" stroke-width="1"/><line x1="773.5" y1="425" x2="773.5" y2="430" stroke="#000" stroke-width="1"/><line x1="780.5" y1="425" x2="780.5" y2="435" stroke="#000" stroke-width="1"/><line x1="787.5" y1="425" x2="787.5" y2="430" stroke="#000" stroke-width="1"/><line x1="794.5" y1="425" x2="794.5" y2="430" stroke="#000" stroke-width="1"/><line x1="801.5" y1="425" x2="801.5" y2="430" stroke="#000" stroke-width="1"/><line x1="809.5" y1="425" x2="809.5" y2="430" stroke="#000" stroke-width="1"/><line x1="816.5" y1="425" x2="816.5" y2="430" stroke="#000" stroke-width="1"/><line x1="823.5" y1="425" x2="823.5" y2="430" stroke="#000" stroke-width="1"/><line x1="830.5" y1="425" x2="830.5" y2="430" stroke="#000" stroke-width="1"/><line x1="837.5" y1="425" x2="837.5" y2="430" stroke="#000" stroke-width="1"/><line x1="845.5" y1="425" x2="845.5" y2="430" stroke="#000" stroke-width="1"/><line x1="852.5" y1="425" x2="852.5" y2="435" stroke="#000" stroke-width="1"/><line x1="859.5" y1="425" x2="859.5" y2="430" stroke="#000" stroke-width="1"/><line x1="866.5" y1="425" x2="866.5" y2="430" stroke="#000" stroke-width="1"/><line x1="873.5" y1="425" x2="873.5" y2="430" stroke="#000" stroke-width="1"/><line x1="880.5" y1="425" x2="880.5" y2="430" stroke="#000" stroke-width="1"/><line x1="888.5" y1="425" x2="888.5" y2="430" stroke="#000" stroke-width="1"/><line x1="895.5" y1="425" x2="895.5" y2="430" stroke="#000" stroke-width="1"/><line x1="902.5" y1="425" x2="902.5" y2="430" stroke="#000" stroke-width="1"/><line x1="909.5" y1="425" x2="909.5" y2="430" stroke="#000" stroke-width="1"/><line x1="916.5" y1="425" x2="916.5" y2="430" stroke="#000" stroke-width="1"/><line x1="923.5" y1="425" x2="923.5" y2="435" stroke="#000" stroke-width="1"/><line x1="931.5" y1="425" x2="931.5" y2="430" stroke="#000" stroke-width="1"/><line x1="938.5" y1="425" x2="938.5" y2="430" stroke="#000" stroke-width="1"/><line x1="945.5" y1="425" x2="945.5" y2="430" stroke="#000" stroke-width="1"/><line x1="952.5" y1="425" x2="952.5" y2="430" stroke="#000" stroke-width="1"/><line x1="959.5" y1="425" x2="959.5" y2="430" stroke="#000" stroke-width="1"/><line x1="966.5" y1="425" x2="966.5" y2="430" stroke="#000" stroke-width="1"/><line x1="974.5" y1="425" x2="974.5" y2="430" stroke="#000" stroke-width="1"/><line x1="981.5" y1="425" x2="981.5" y2="430" stroke="#000" stroke-width="1"/><line x1="988.5" y1="425" x2="988.5" y2="430" stroke="#000" stroke-width="1"/><line x1="995.5" y1="425" x2="995.5" y2="435" stroke="#000" stroke-width="1"/><line x1="1002.5" y1="425" x2="1002.5" y2="430" stroke="#000" stroke-width="1"/><line x1="1010.5" y1="425" x2="1010.5" y2="430" stroke="#000" stroke-width="1"/><line x1="1017.5" y1="425" x2="1017.5" y2="430" stroke="#000" stroke-width="1"/><line x1="1024.5" y1="425" x2="1024.5" y2="430" stroke="#000" stroke-width="1"/><line x1="1031.5" y1="425" x2="1031.5" y2="430" stroke="#000" stroke-width="1"/><line x1="1038.5" y1="425" x2="1038.5" y2="430" stroke="#000" stroke-width="1"/><line x1="1045.5" y1="425" x2="1045.5" y2="430" stroke="#000" stroke-width="1"/><line x1="1053.5" y1="425" x2="1053.5" y2="430" stroke="#000" stroke-width="1"/><line x1="1060.5" y1="425" x2="1060.5" y2="430" stroke="#000" stroke-width="1"/><line x1="1067.5" y1="425" x2="1067.5" y2="435" stroke="#000" stroke-width="1"/><line x1="1074.5" y1="425" x2="1074.5" y2="430" stroke="#000" stroke-width="1"/><line x1="1081.5" y1="425" x2="1081.5" y2="430" stroke="#000" stroke-width="1"/><line x1="1088.5" y1="425" x2="1088.5" y2="430" stroke="#000" stroke-width="1"/><line x1="1096.5" y1="425" x2="1096.5" y2="430" stroke="#000" stroke-width="1"/><line x1="1103.5" y1="425" x2="1103.5" y2="430" stroke="#000" stroke-width="1"/><line x1="1110.5" y1="425" x2="1110.5" y2="430" stroke="#000" stroke-width="1"/><line x1="1117.5" y1="425" x2="1117.5" y2="430" stroke="#000" stroke-width="1"/><line x1="1124.5" y1="425" x2="1124.5" y2="430" stroke="#000" stroke-width="1"/><line x1="1131.5" y1="425" x2="1131.5" y2="430" stroke="#000" stroke-width="1"/><line x1="1139.5" y1="425" x2="1139.5" y2="435" stroke="#000" stroke-width="1"/><line x1="1146.5" y1="425" x2="1146.5" y2="430" stroke="#000" stroke-width="1"/><line x1="1153.5" y1="425" x2="1153.5" y2="430" stroke="#000" stroke-width="1"/><line x1="1160.5" y1="425" x2="1160.5" y2="430" stroke="#000" stroke-width="1"/><line x1="1167.5" y1="425" x2="1167.5" y2="430" stroke="#000" stroke-width="1"/><line x1="1175.5" y1="425" x2="1175.5" y2="430" stroke="#000" stroke-width="1"/><line x1="1182.5" y1="425" x2="1182.5" y2="430" stroke="#000" stroke-width="1"/><rect x="709.5" y="195.5" width="479" height="230" fill="none" stroke="#000" stroke-width="1.1"/></g><line x1="709" y1="310" x2="1197" y2="310" stroke="#000" stroke-width="1.2"/><line x1="1188" y1="310" x2="1197" y2="310" stroke="#d03030" stroke-width="1.2"/><circle cx="709.00" cy="310" r="2.9" fill="none" stroke="#000" stroke-width="1.1"/><circle cx="714.99" cy="310" r="2.9" fill="none" stroke="#000" stroke-width="1.1"/><circle cx="720.97" cy="310" r="2.9" fill="none" stroke="#000" stroke-width="1.1"/><circle cx="726.96" cy="310" r="2.9" fill="none" stroke="#000" stroke-width="1.1"/><circle cx="732.94" cy="310" r="2.9" fill="none" stroke="#000" stroke-width="1.1"/><circle cx="738.92" cy="310" r="2.9" fill="none" stroke="#000" stroke-width="1.1"/><circle cx="744.91" cy="310" r="2.9" fill="none" stroke="#000" stroke-width="1.1"/><circle cx="750.89" cy="310" r="2.9" fill="none" stroke="#000" stroke-width="1.1"/><circle cx="756.88" cy="310" r="2.9" fill="none" stroke="#000" stroke-width="1.1"/><circle cx="762.87" cy="310" r="2.9" fill="none" stroke="#000" stroke-width="1.1"/><circle cx="768.85" cy="310" r="2.9" fill="none" stroke="#000" stroke-width="1.1"/><circle cx="774.84" cy="310" r="2.9" fill="none" stroke="#000" stroke-width="1.1"/><circle cx="780.82" cy="310" r="2.9" fill="none" stroke="#000" stroke-width="1.1"/><circle cx="786.81" cy="310" r="2.9" fill="none" stroke="#000" stroke-width="1.1"/><circle cx="792.79" cy="310" r="2.9" fill="none" stroke="#000" stroke-width="1.1"/><circle cx="798.77" cy="310" r="2.9" fill="none" stroke="#000" stroke-width="1.1"/><circle cx="804.76" cy="310" r="2.9" fill="none" stroke="#000" stroke-width="1.1"/><circle cx="810.75" cy="310" r="2.9" fill="none" stroke="#000" stroke-width="1.1"/><circle cx="816.73" cy="310" r="2.9" fill="none" stroke="#000" stroke-width="1.1"/><circle cx="822.72" cy="310" r="2.9" fill="none" stroke="#000" stroke-width="1.1"/><circle cx="828.70" cy="310" r="2.9" fill="none" stroke="#000" stroke-width="1.1"/><circle cx="834.68" cy="310" r="2.9" fill="none" stroke="#000" stroke-width="1.1"/><circle cx="840.67" cy="310" r="2.9" fill="none" stroke="#000" stroke-width="1.1"/><circle cx="846.65" cy="310" r="2.9" fill="none" stroke="#000" stroke-width="1.1"/><circle cx="852.64" cy="310" r="2.9" fill="none" stroke="#000" stroke-width="1.1"/><circle cx="858.62" cy="310" r="2.9" fill="none" stroke="#000" stroke-width="1.1"/><circle cx="864.61" cy="310" r="2.9" fill="none" stroke="#000" stroke-width="1.1"/><circle cx="870.60" cy="310" r="2.9" fill="none" stroke="#000" stroke-width="1.1"/><circle cx="876.58" cy="310" r="2.9" fill="none" stroke="#000" stroke-width="1.1"/><circle cx="882.57" cy="310" r="2.9" fill="none" stroke="#000" stroke-width="1.1"/><circle cx="888.55" cy="310" r="2.9" fill="none" stroke="#000" stroke-width="1.1"/><circle cx="894.53" cy="310" r="2.9" fill="none" stroke="#000" stroke-width="1.1"/><circle cx="900.52" cy="310" r="2.9" fill="none" stroke="#000" stroke-width="1.1"/><circle cx="906.50" cy="310" r="2.9" fill="none" stroke="#000" stroke-width="1.1"/><circle cx="912.49" cy="310" r="2.9" fill="none" stroke="#000" stroke-width="1.1"/><circle cx="918.48" cy="310" r="2.9" fill="none" stroke="#000" stroke-width="1.1"/><circle cx="924.46" cy="310" r="2.9" fill="none" stroke="#000" stroke-width="1.1"/><circle cx="930.45" cy="310" r="2.9" fill="none" stroke="#000" stroke-width="1.1"/><circle cx="936.43" cy="310" r="2.9" fill="none" stroke="#000" stroke-width="1.1"/><circle cx="942.41" cy="310" r="2.9" fill="none" stroke="#000" stroke-width="1.1"/><circle cx="948.40" cy="310" r="2.9" fill="none" stroke="#000" stroke-width="1.1"/><circle cx="954.38" cy="310" r="2.9" fill="none" stroke="#000" stroke-width="1.1"/><circle cx="960.37" cy="310" r="2.9" fill="none" stroke="#000" stroke-width="1.1"/><circle cx="966.36" cy="310" r="2.9" fill="none" stroke="#000" stroke-width="1.1"/><circle cx="972.34" cy="310" r="2.9" fill="none" stroke="#000" stroke-width="1.1"/><circle cx="978.33" cy="310" r="2.9" fill="none" stroke="#000" stroke-width="1.1"/><circle cx="984.31" cy="310" r="2.9" fill="none" stroke="#000" stroke-width="1.1"/><circle cx="990.30" cy="310" r="2.9" fill="none" stroke="#000" stroke-width="1.1"/><circle cx="996.28" cy="310" r="2.9" fill="none" stroke="#000" stroke-width="1.1"/><circle cx="1002.27" cy="310" r="2.9" fill="none" stroke="#000" stroke-width="1.1"/><circle cx="1008.25" cy="310" r="2.9" fill="none" stroke="#000" stroke-width="1.1"/><circle cx="1014.24" cy="310" r="2.9" fill="none" stroke="#000" stroke-width="1.1"/><circle cx="1020.22" cy="310" r="2.9" fill="none" stroke="#000" stroke-width="1.1"/><circle cx="1026.20" cy="310" r="2.9" fill="none" stroke="#000" stroke-width="1.1"/><circle cx="1032.19" cy="310" r="2.9" fill="none" stroke="#000" stroke-width="1.1"/><circle cx="1038.17" cy="310" r="2.9" fill="none" stroke="#000" stroke-width="1.1"/><circle cx="1044.16" cy="310" r="2.9" fill="none" stroke="#000" stroke-width="1.1"/><circle cx="1050.14" cy="310" r="2.9" fill="none" stroke="#000" stroke-width="1.1"/><circle cx="1056.13" cy="310" r="2.9" fill="none" stroke="#000" stroke-width="1.1"/><circle cx="1062.12" cy="310" r="2.9" fill="none" stroke="#000" stroke-width="1.1"/><circle cx="1068.10" cy="310" r="2.9" fill="none" stroke="#000" stroke-width="1.1"/><circle cx="1074.09" cy="310" r="2.9" fill="none" stroke="#000" stroke-width="1.1"/><circle cx="1080.07" cy="310" r="2.9" fill="none" stroke="#000" stroke-width="1.1"/><circle cx="1086.06" cy="310" r="2.9" fill="none" stroke="#000" stroke-width="1.1"/><circle cx="1092.04" cy="310" r="2.9" fill="none" stroke="#000" stroke-width="1.1"/><circle cx="1098.03" cy="310" r="2.9" fill="none" stroke="#000" stroke-width="1.1"/><circle cx="1104.01" cy="310" r="2.9" fill="none" stroke="#000" stroke-width="1.1"/><circle cx="1109.99" cy="310" r="2.9" fill="none" stroke="#000" stroke-width="1.1"/><circle cx="1115.98" cy="310" r="2.9" fill="none" stroke="#000" stroke-width="1.1"/><circle cx="1121.97" cy="310" r="2.9" fill="none" stroke="#000" stroke-width="1.1"/><circle cx="1127.95" cy="310" r="2.9" fill="none" stroke="#000" stroke-width="1.1"/><circle cx="1133.93" cy="310" r="2.9" fill="none" stroke="#000" stroke-width="1.1"/><circle cx="1139.92" cy="310" r="2.9" fill="none" stroke="#000" stroke-width="1.1"/><circle cx="1145.90" cy="310" r="2.9" fill="none" stroke="#000" stroke-width="1.1"/><circle cx="1151.89" cy="310" r="2.9" fill="none" stroke="#000" stroke-width="1.1"/><circle cx="1157.88" cy="310" r="2.9" fill="none" stroke="#000" stroke-width="1.1"/><circle cx="1163.86" cy="310" r="2.9" fill="none" stroke="#000" stroke-width="1.1"/><circle cx="1169.85" cy="310" r="2.9" fill="none" stroke="#000" stroke-width="1.1"/><circle cx="1175.83" cy="310" r="2.9" fill="none" stroke="#000" stroke-width="1.1"/><circle cx="1181.82" cy="310" r="2.9" fill="none" stroke="#000" stroke-width="1.1"/><circle cx="1187.80" cy="310" r="2.9" fill="none" stroke="#000" stroke-width="1.1"/></svg>
<div class="t" id="t46" style="left:709px;top:172.19px;font-size:11px;color:#000;letter-spacing:-0.121px;">Temperature CCD, toutes les 5s</div>
<div class="t" id="t47" style="left:678.5px;top:280.69px;font-size:11px;color:#000;">-10</div>
<div class="t" id="t48" style="left:684px;top:398.19px;font-size:11px;color:#000;">-9</div>
<div class="t" id="t49" style="left:777.4px;top:439.69px;font-size:11px;color:#000;">1</div>
<div class="t" id="t50" style="left:849.14px;top:439.69px;font-size:11px;color:#000;">2</div>
<div class="t" id="t51" style="left:920.88px;top:439.69px;font-size:11px;color:#000;">3</div>
<div class="t" id="t52" style="left:992.62px;top:439.69px;font-size:11px;color:#000;">4</div>
<div class="t" id="t53" style="left:1064.3600000000001px;top:439.69px;font-size:11px;color:#000;">5</div>
<div class="t" id="t54" style="left:1136.1px;top:439.69px;font-size:11px;color:#000;">6</div>
<div class="t" id="t55" style="left:918.5px;top:456.69px;font-size:11px;color:#000;letter-spacing:-0.101px;">Temps (Min)</div>
<div class="t" id="t56" style="left:1204px;top:256.69px;font-size:11px;color:#000;">V</div>
<div class="t" id="t57" style="left:1204px;top:266.89px;font-size:11px;color:#000;">a</div>
<div class="t" id="t58" style="left:1204px;top:277.09px;font-size:11px;color:#000;">l</div>
<div class="t" id="t59" style="left:1204px;top:287.29px;font-size:11px;color:#000;">e</div>
<div class="t" id="t60" style="left:1204px;top:297.49px;font-size:11px;color:#000;">u</div>
<div class="t" id="t61" style="left:1204px;top:307.69px;font-size:11px;color:#000;">r</div>
<div class="t" id="t62" style="left:1204px;top:335.54px;font-size:10px;color:#000;">°</div>
<div class="t" id="t63" style="left:1204px;top:346.19px;font-size:11px;color:#000;">C</div>
<div class="a" style="left:658px;top:480px;width:74px;height:21px;background:#e1e1e1;border:1px solid #adadad"></div>
<div class="t" id="t64" style="left:671px;top:485.27px;font-size:11.5px;color:#000;letter-spacing:-0.227px;">Réglages</div>
<div class="a" style="left:657px;top:502px;width:583px;height:1px;background:#d8d8d8"></div>
<div class="a" style="left:806px;top:505px;width:1px;height:16px;background:#d8d8d8"></div>
<div class="t" id="t65" style="left:659.5px;top:506.77px;font-size:11.5px;color:#000;letter-spacing:-0.522px;">579x330</div>
<svg class="a" style="left:1230px;top:510px;" width="10" height="10" viewBox="0 0 10 10"><g fill="#b8b8b8"><rect x="7" y="1" width="2" height="2"/><rect x="4" y="4" width="2" height="2"/><rect x="7" y="4" width="2" height="2"/><rect x="1" y="7" width="2" height="2"/><rect x="4" y="7" width="2" height="2"/><rect x="7" y="7" width="2" height="2"/></g></svg>
<div class="a" style="left:1664px;top:85px;width:250px;height:25px;background:#fbfbfb"></div>
<div class="t" id="t66" style="left:1667px;top:90.54px;font-size:12px;color:#9a9a9a;letter-spacing:-0.502px;">ARTEMIS CCD ATIK-414ex&nbsp;&nbsp; -&gt;&nbsp;&nbsp; -9.8°C&nbsp;&nbsp;&nbsp; [8...</div>
<div class="a" style="left:1894px;top:88px;width:18px;height:18px;background:#dedede"></div>
<svg class="a" style="left:1899px;top:93px;" width="8" height="8" viewBox="0 0 8 8"><path d="M1 1l6 6M7 1l-6 6" stroke="#f4f4f4" stroke-width="1"/></svg>
<div class="a" style="left:1664px;top:130px;width:248px;height:383px;background:#fff;border:1px solid #d9d9d9"></div>
<div class="a" style="left:1665px;top:131px;width:246px;height:381px;background:#f0f0f0"></div>
<div class="a" style="left:1664px;top:110px;width:148px;height:21px;background:#fff;border:1px solid #d9d9d9;border-bottom:none"></div>
<div class="a" style="left:1665px;top:111px;width:146px;height:21px;background:#f0f0f0"></div>
<div class="t" id="t67" style="left:1672px;top:114.68px;font-size:11.6px;color:#000;letter-spacing:-0.505px;">ARTEMIS CCD ATIK-414ex</div>
<div class="a" style="left:1669px;top:135px;width:119px;height:38px;background:#e1e1e1;border:1px solid #adadad"></div>
<div class="t" id="t68" style="left:1698.5px;top:148.54px;font-size:12px;color:#000;letter-spacing:-1.096px;">DEMARRER</div>
<div class="a" style="left:1791px;top:135px;width:119px;height:38px;background:#cccccc;border:1px solid #bfbfbf"></div>
<div class="t" id="t69" style="left:1820.5px;top:148.97px;font-size:11.5px;color:#838383;letter-spacing:-2.295px;">ABANDONNER</div>
<div class="t" id="t70" style="left:1673px;top:178.67px;font-size:11.5px;color:#000;letter-spacing:-0.814px;">Temps:</div>
<div class="a" style="left:1676px;top:204px;width:226px;height:1px;background:#a0a0a0"></div>
<div class="a" style="left:1676px;top:205px;width:226px;height:1px;background:#fff"></div>
<div class="t" id="t71" style="left:1672.6px;top:213.07px;font-size:11.5px;color:#000;letter-spacing:-0.635px;">Exp.(sec)</div>
<div class="a" style="left:1720px;top:209px;width:65px;height:21px;background:#fff;border:1px solid #7a7a7a"></div>
<div class="t" id="t72" style="left:1724px;top:213.77px;font-size:11.5px;color:#000;">10</div>
<svg class="a" style="left:1771px;top:216px;" width="10" height="6" viewBox="0 0 10 6"><path d="M1 1l4 4 4-4" fill="none" stroke="#555" stroke-width="1"/></svg>
<div class="t" id="t73" style="left:1788.6px;top:210.27px;font-size:11.5px;color:#000;letter-spacing:-0.565px;">Bouclage</div>
<div class="a" style="left:1870px;top:209px;width:13px;height:13px;background:#fff;border:1px solid #333"></div>
<div class="a" style="left:1889px;top:208px;width:18px;height:18px;background:#cccccc;border:1px solid #bfbfbf"></div>
<svg class="a" style="left:1892px;top:211px;" width="12" height="12" viewBox="0 0 12 12"><path d="M1.5 1.5l9 9M10.5 1.5l-9 9" stroke="#8a8a8a" stroke-width="1"/></svg>
<div class="t" id="t74" style="left:1788.6px;top:229.27px;font-size:11.5px;color:#000;letter-spacing:-0.379px;">Bouclage infini</div>
<div class="a" style="left:1870px;top:228px;width:13px;height:13px;background:#fff;border:1px solid #333"></div>
<svg class="a" style="left:1870px;top:228px;" width="13" height="13" viewBox="0 0 13 13"><path d="M2.5 6.5l3 3 5-6" fill="none" stroke="#222" stroke-width="1.1"/></svg>
<div class="t" id="t75" style="left:1672.6px;top:250.27px;font-size:11.5px;color:#000;letter-spacing:-0.447px;">Nbre de boucles</div>
<div class="a" style="left:1752px;top:246px;width:55px;height:22px;background:#fff;border:1px solid #cfcfcf"></div>
<div class="t" id="t76" style="left:1756px;top:250.77px;font-size:11.5px;color:#9c9c9c;">10</div>
<div class="a" style="left:1792px;top:249px;width:12px;height:7px;background:#dedede"></div>
<div class="a" style="left:1792px;top:257px;width:12px;height:7px;background:#dedede"></div>
<svg class="a" style="left:1792px;top:249px;" width="12" height="16" viewBox="0 0 12 16"><path d="M2.5 6.5h7l-3.5-4z M2.5 8.5h7l-3.5 4z" fill="#000"/></svg>
<div class="t" id="t77" style="left:1811.4px;top:250.27px;font-size:11.5px;color:#000;letter-spacing:-0.577px;">Délai (s)</div>
<div class="a" style="left:1858px;top:246px;width:40px;height:22px;background:#fff;border:1px solid #7a7a7a"></div>
<div class="t" id="t78" style="left:1862px;top:250.77px;font-size:11.5px;color:#000;">1</div>
<div class="a" style="left:1883px;top:249px;width:12px;height:7px;background:#dedede"></div>
<div class="a" style="left:1883px;top:257px;width:12px;height:7px;background:#dedede"></div>
<svg class="a" style="left:1883px;top:249px;" width="12" height="16" viewBox="0 0 12 16"><path d="M2.5 6.5h7l-3.5-4z M2.5 8.5h7l-3.5 4z" fill="#000"/></svg>
<div class="a" style="left:1676px;top:273px;width:226px;height:1px;background:#a0a0a0"></div>
<div class="a" style="left:1676px;top:274px;width:226px;height:1px;background:#fff"></div>
<div class="t" id="t79" style="left:1672.6px;top:282.07px;font-size:11.5px;color:#000;letter-spacing:-0.875px;">BinX:</div>
<div class="a" style="left:1702px;top:279px;width:40px;height:22px;background:#fff;border:1px solid #7a7a7a"></div>
<div class="t" id="t80" style="left:1706px;top:283.77px;font-size:11.5px;color:#000;">1</div>
<div class="a" style="left:1727px;top:282px;width:12px;height:7px;background:#dedede"></div>
<div class="a" style="left:1727px;top:290px;width:12px;height:7px;background:#dedede"></div>
<svg class="a" style="left:1727px;top:282px;" width="12" height="16" viewBox="0 0 12 16"><path d="M2.5 6.5h7l-3.5-4z M2.5 8.5h7l-3.5 4z" fill="#000"/></svg>
<div class="t" id="t81" style="left:1752.5px;top:282.07px;font-size:11.5px;color:#000;letter-spacing:-0.842px;">BinY:</div>
<div class="a" style="left:1787px;top:279px;width:40px;height:22px;background:#fff;border:1px solid #7a7a7a"></div>
<div class="t" id="t82" style="left:1791px;top:283.77px;font-size:11.5px;color:#000;">1</div>
<div class="a" style="left:1812px;top:282px;width:12px;height:7px;background:#dedede"></div>
<div class="a" style="left:1812px;top:290px;width:12px;height:7px;background:#dedede"></div>
<svg class="a" style="left:1812px;top:282px;" width="12" height="16" viewBox="0 0 12 16"><path d="M2.5 6.5h7l-3.5-4z M2.5 8.5h7l-3.5 4z" fill="#000"/></svg>
<div class="a" style="left:1843px;top:283px;width:13px;height:13px;background:#fff;border:1px solid #333"></div>
<svg class="a" style="left:1843px;top:283px;" width="13" height="13" viewBox="0 0 13 13"><path d="M2.5 6.5l3 3 5-6" fill="none" stroke="#222" stroke-width="1.1"/></svg>
<div class="t" id="t83" style="left:1859.7px;top:284.77px;font-size:11.5px;color:#000;letter-spacing:-0.562px;">Lier</div>
<div class="a" style="left:1674px;top:307px;width:73px;height:23px;background:#e1e1e1;border:1px solid #adadad"></div>
<div class="t" id="t84" style="left:1682.5px;top:313.27px;font-size:11.5px;color:#000;letter-spacing:-0.488px;">Exp Longue</div>
<div class="a" style="left:1754px;top:307px;width:73px;height:23px;background:#e1e1e1;border:1px solid #adadad"></div>
<div class="t" id="t85" style="left:1764.5px;top:313.27px;font-size:11.5px;color:#000;letter-spacing:-0.418px;">Exp. courte</div>
<div class="a" style="left:1834px;top:307px;width:73px;height:23px;background:#e1e1e1;border:1px solid #adadad"></div>
<div class="t" id="t86" style="left:1846px;top:313.27px;font-size:11.5px;color:#000;letter-spacing:-0.400px;">Sequence</div>
<div class="a" style="left:1684px;top:333px;width:209px;height:15px;background:#ffff00;border-radius:3px"></div>
<div class="t" id="t87" style="left:1748.7px;top:333.57px;font-size:11.5px;color:#000;letter-spacing:-0.447px;">Atik 414ex - M</div>
<div class="a" style="left:1668px;top:370px;width:240px;height:139px;background:#fff;border:1px solid #d9d9d9"></div>
<div class="a" style="left:1671px;top:353px;width:58px;height:18px;background:#f0f0f0;border:1px solid #d9d9d9;border-bottom:none"></div>
<div class="a" style="left:1729px;top:353px;width:48px;height:18px;background:#f0f0f0;border:1px solid #d9d9d9;border-bottom:none"></div>
<div class="a" style="left:1847px;top:353px;width:31px;height:18px;background:#f0f0f0;border:1px solid #d9d9d9;border-bottom:none"></div>
<div class="a" style="left:1777px;top:350px;width:70px;height:21px;background:#fff;border:1px solid #d9d9d9;border-bottom:none"></div>
<div class="t" id="t88" style="left:1676.5px;top:355.97px;font-size:11.5px;color:#000;letter-spacing:-0.617px;">Fenêtrage</div>
<div class="t" id="t89" style="left:1736.5px;top:355.97px;font-size:11.5px;color:#000;letter-spacing:-0.982px;">Caméra</div>
<div class="t" id="t90" style="left:1784.5px;top:353.67px;font-size:11.5px;color:#000;letter-spacing:-0.742px;">Temp. CCD</div>
<div class="t" id="t91" style="left:1851px;top:355.97px;font-size:11.5px;color:#000;letter-spacing:-0.500px;">Optio</div>
<div class="a" style="left:1877px;top:352px;width:16px;height:16px;background:#f0f0f0;border:1px solid #bdbdbd"></div>
<div class="a" style="left:1892px;top:352px;width:17px;height:16px;background:#f0f0f0;border:1px solid #bdbdbd"></div>
<svg class="a" style="left:1877px;top:352px;" width="32" height="16" viewBox="0 0 32 16"><path d="M10 5v6l-3.5-3z M22 5v6l3.5-3z" fill="#000"/></svg>
<div class="t" id="t92" style="left:1677px;top:378.97px;font-size:11.5px;color:#000;letter-spacing:-0.565px;">Temperature CCD: -9.79°C</div>
<div class="a" style="left:1878px;top:375px;width:18px;height:18px;background:#e5f1fb;border:2px solid #0078d7"></div>
<div class="t" id="t93" style="left:1882px;top:378.77px;font-size:11.5px;color:#000;">G</div>
<div class="t" id="t94" style="left:1677px;top:400.27px;font-size:11.5px;color:#000;letter-spacing:-0.600px;">Temp. CCD requise (°C)</div>
<div class="a" style="left:1793px;top:397px;width:50px;height:20px;background:#fff;border:1px solid #cccccc"></div>
<div class="t" id="t95" style="left:1796px;top:400.77px;font-size:11.5px;color:#9c9c9c;">10.0</div>
<svg class="a" style="left:1829px;top:403px;" width="10" height="6" viewBox="0 0 10 6"><path d="M1 1l4 4 4-4" fill="none" stroke="#aaa" stroke-width="1"/></svg>
<div class="a" style="left:1853px;top:397px;width:43px;height:18px;background:#cccccc;border:1px solid #bfbfbf"></div>
<div class="t" id="t96" style="left:1862px;top:400.27px;font-size:11.5px;color:#838383;letter-spacing:-0.555px;">Appl.</div>
<div class="t" id="t97" style="left:1677px;top:424.87px;font-size:11.5px;color:#000;letter-spacing:-0.568px;">Puissance refroidissement (%) : 83</div>
<div class="a" style="left:1878px;top:421px;width:18px;height:18px;background:#e1e1e1;border:1px solid #adadad"></div>
<div class="t" id="t98" style="left:1882px;top:424.77px;font-size:11.5px;color:#000;">G</div>
<div class="t" id="t99" style="left:1677px;top:444.87px;font-size:11.5px;color:#000;letter-spacing:-0.511px;">Consigne de température : 10.0 °C</div>
<div class="a" style="left:1677px;top:487px;width:52px;height:18px;background:#cccccc;border:1px solid #bfbfbf"></div>
<div class="t" id="t100" style="left:1690px;top:491.07px;font-size:11.5px;color:#838383;letter-spacing:-0.811px;">Editer</div>
<div class="a" style="left:1735px;top:487px;width:52px;height:18px;background:#e1e1e1;border:1px solid #adadad"></div>
<div class="t" id="t101" style="left:1750.5px;top:491.07px;font-size:11.5px;color:#000;letter-spacing:-0.390px;">Stop</div>
<div class="a" style="left:1793px;top:487px;width:52px;height:18px;background:#cccccc;border:1px solid #bfbfbf"></div>
<div class="t" id="t102" style="left:1799.5px;top:491.07px;font-size:11.5px;color:#838383;letter-spacing:-0.449px;">Descen.</div>
<div class="a" style="left:1851px;top:487px;width:52px;height:18px;background:#cccccc;border:1px solid #bfbfbf"></div>
<div class="t" id="t103" style="left:1861.5px;top:491.07px;font-size:11.5px;color:#838383;letter-spacing:-0.561px;">Monter</div>
<div class="a" style="left:1665px;top:515px;width:248px;height:29px;background:#e1e1e1;border:1px solid #adadad"></div>
<svg class="a" style="left:1758px;top:522px;" width="16" height="16" viewBox="0 0 16 16"><path d="M5.5 1h5v5h4l-6.5 6.5-6.5-6.5h4z" fill="#e01010"/><rect x="1" y="13" width="14" height="2" fill="#e01010"/></svg>
<div class="t" id="t104" style="left:1778.5px;top:524.07px;font-size:11.5px;color:#000;letter-spacing:-0.838px;">Minimiser</div>
<div class="a" style="left:1918px;top:82px;width:1px;height:929px;background:#dadada"></div>
<svg class="a" style="left:1893px;top:934px;" width="27" height="66" viewBox="0 0 27 66"><path d="M27 0.5H5a3 3 0 0 0-3 3V43l25 13z" fill="#fafafa" stroke="#d0d0d0" stroke-width="1"/><rect x="6" y="5" width="21" height="21" fill="#0e8ee9"/><circle cx="16.5" cy="15.5" r="8.5" fill="#fff"/><circle cx="16.5" cy="15.5" r="6.6" fill="#0e8ee9"/><path d="M10.5 15.5l3-3v2h6v-2l3 3-3 3v-2h-6v2z" fill="#fff"/></svg>
</body></html>
